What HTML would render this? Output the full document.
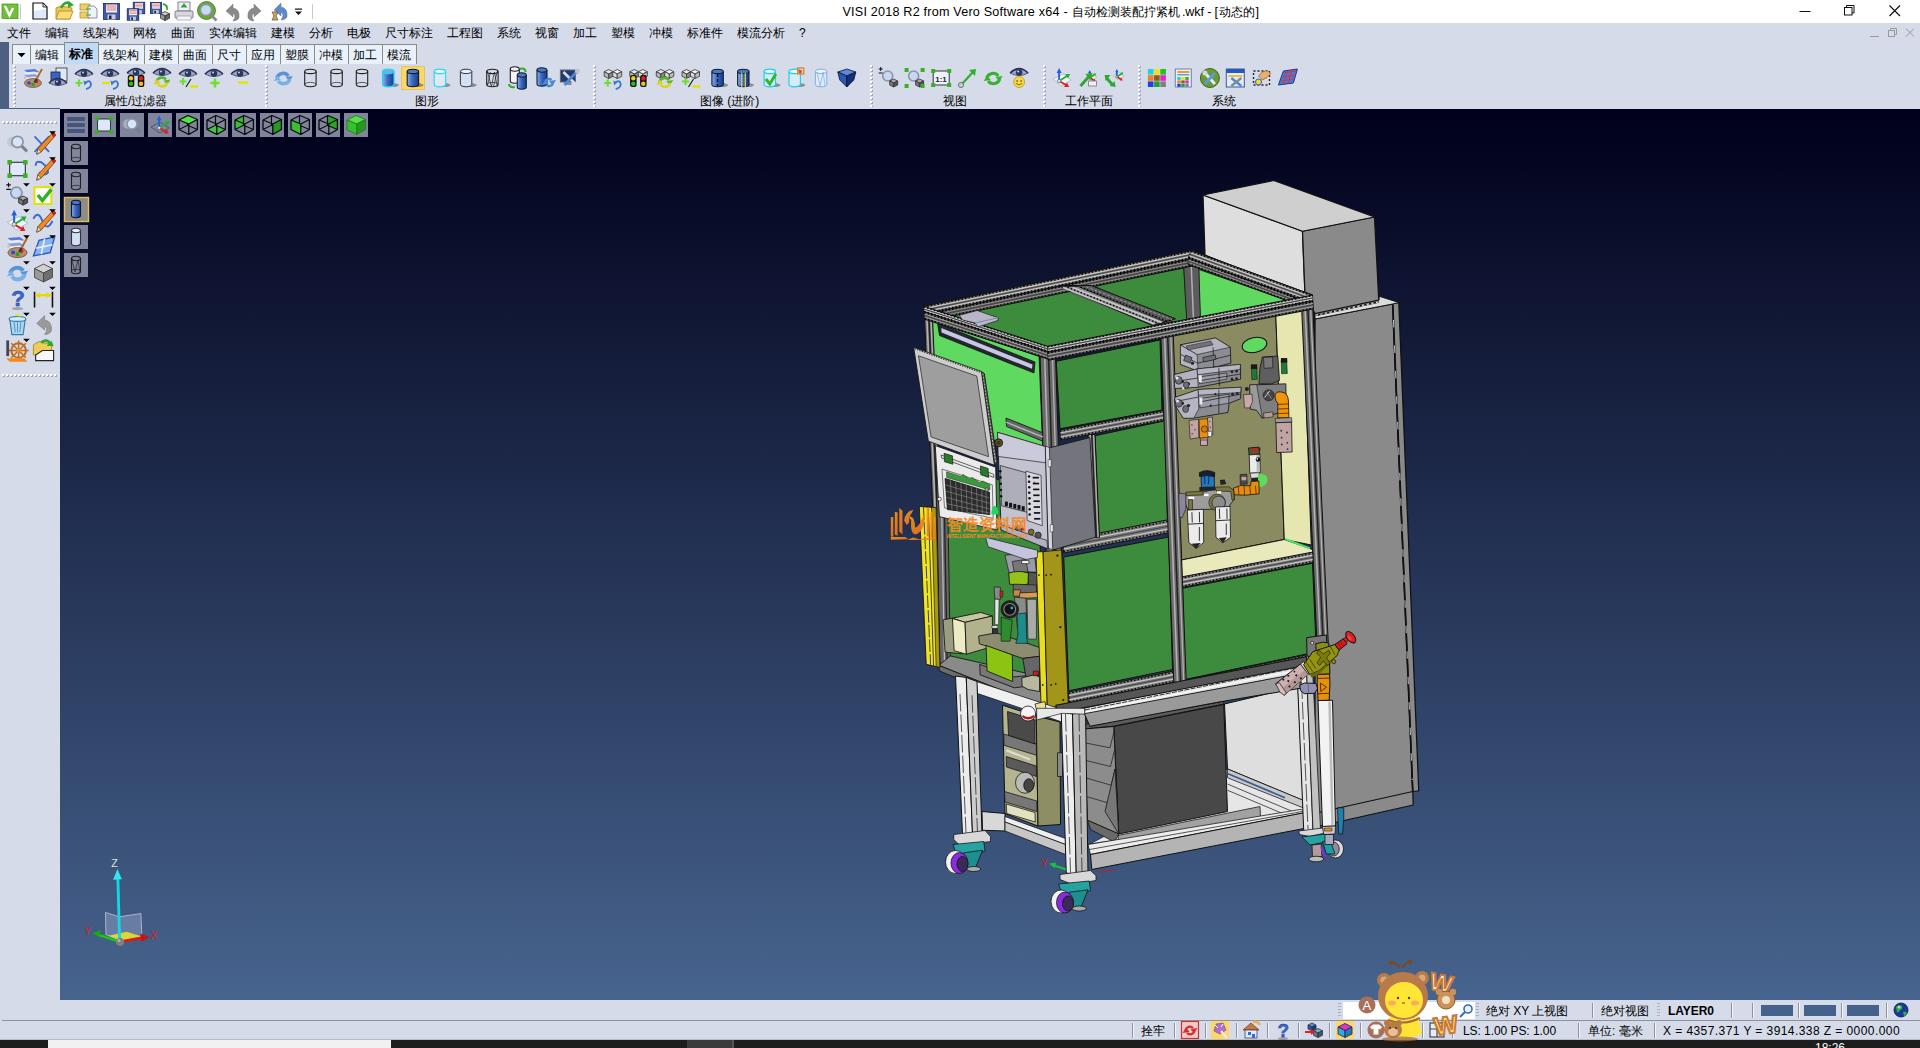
<!DOCTYPE html>
<html>
<head>
<meta charset="utf-8">
<title>VISI 2018 R2</title>
<style>
html,body{margin:0;padding:0;}
body{width:1920px;height:1048px;overflow:hidden;background:#d6dbe9;font-family:"Liberation Sans",sans-serif;font-size:12px;color:#000;position:relative;}
.abs{position:absolute;}
.t{position:absolute;white-space:pre;font-size:12px;line-height:14px;color:#000;}
.grip{position:absolute;top:65px;width:3px;height:42px;background-image:linear-gradient(to bottom,#fff 0,#fff 2px,transparent 2px,transparent 4px),linear-gradient(to bottom,#9ba3b8 0,#9ba3b8 2px,transparent 2px,transparent 4px);background-size:2px 4px,2px 4px;background-position:0 0,1px 1px;background-repeat:repeat-y,repeat-y;}
.hgrip{position:absolute;height:3px;background-image:linear-gradient(to right,#fff 0,#fff 2px,transparent 2px,transparent 4px),linear-gradient(to right,#9ba3b8 0,#9ba3b8 2px,transparent 2px,transparent 4px);background-size:4px 2px,4px 2px;background-position:0 0,1px 1px;background-repeat:repeat-x,repeat-x;}
.grip2{position:absolute;width:3px;height:15px;background-image:linear-gradient(to bottom,#aab0c2 0,#aab0c2 1px,transparent 1px,transparent 3px);background-size:3px 3px;}
.vsep{position:absolute;width:1px;height:15px;background:#8e929f;box-shadow:1px 0 0 #f4f6fb;}
#viewport{left:60px;top:109px;width:1860px;height:891px;background:linear-gradient(to bottom,#00001a 0%,#47648e 100%);}
</style>
</head>
<body>
<div class="abs" style="left:0;top:0;width:1920px;height:23px;background:#fff"></div>
<div class="abs" style="left:0;top:23px;width:1920px;height:20px;background:#d6dbe9"></div>
<div class="abs" style="left:0;top:43px;width:1920px;height:66px;background:#d6dbe9"></div>
<div class="abs" style="left:0;top:42px;width:9px;height:67px;background:#4d6082"></div>
<div class="abs" style="left:9px;top:108px;width:51px;height:1px;background:#4d6082"></div>
<span class="t" style="letter-spacing:0.205px;left:842.5px;top:4.5px;font-size:12.6px;">VISI 2018 R2 from Vero Software x64 - </span>
<span class="t" style="left:1072px;top:4.5px;font-size:12.2px;">自动检测装配拧紧机</span>
<span class="t" style="letter-spacing:-0.137px;left:1182px;top:4.5px;font-size:12.6px;">.wkf - [</span>
<span class="t" style="left:1218.5px;top:4.5px;font-size:12.2px;">动态的</span>
<span class="t" style="left:1255.5px;top:4.5px;font-size:12.6px;">]</span>
<span class="t" style="left:7px;top:26px;">文件</span>
<span class="t" style="left:45px;top:26px;">编辑</span>
<span class="t" style="left:83px;top:26px;">线架构</span>
<span class="t" style="left:133px;top:26px;">网格</span>
<span class="t" style="left:171px;top:26px;">曲面</span>
<span class="t" style="left:209px;top:26px;">实体编辑</span>
<span class="t" style="left:271px;top:26px;">建模</span>
<span class="t" style="left:309px;top:26px;">分析</span>
<span class="t" style="left:347px;top:26px;">电极</span>
<span class="t" style="left:385px;top:26px;">尺寸标注</span>
<span class="t" style="left:447px;top:26px;">工程图</span>
<span class="t" style="left:497px;top:26px;">系统</span>
<span class="t" style="left:535px;top:26px;">视窗</span>
<span class="t" style="left:573px;top:26px;">加工</span>
<span class="t" style="left:611px;top:26px;">塑模</span>
<span class="t" style="left:649px;top:26px;">冲模</span>
<span class="t" style="left:687px;top:26px;">标准件</span>
<span class="t" style="left:737px;top:26px;">模流分析</span>
<span class="t" style="left:799px;top:26px;">?</span>
<div class="abs" style="left:12px;top:44px;width:19px;height:20px;background:#e9f1fc;border:1px solid #8e8c7c;border-bottom:none;box-sizing:border-box"></div>
<div class="abs" style="left:30px;top:44px;width:35px;height:20px;background:#e9f1fc;border:1px solid #8e8c7c;border-bottom:none;box-sizing:border-box"></div>
<span class="t" style="left:35px;top:48px;">编辑</span>
<div class="abs" style="left:64px;top:42px;width:35px;height:22px;background:#c1dbf6;border:1px solid #8c8a80;border-bottom:none;box-sizing:border-box"></div>
<span class="t" style="left:69px;top:47px;font-weight:bold;">标准</span>
<div class="abs" style="left:98px;top:44px;width:47px;height:20px;background:#e9f1fc;border:1px solid #8e8c7c;border-bottom:none;box-sizing:border-box"></div>
<span class="t" style="left:103px;top:48px;">线架构</span>
<div class="abs" style="left:144px;top:44px;width:35px;height:20px;background:#e9f1fc;border:1px solid #8e8c7c;border-bottom:none;box-sizing:border-box"></div>
<span class="t" style="left:149px;top:48px;">建模</span>
<div class="abs" style="left:178px;top:44px;width:35px;height:20px;background:#e9f1fc;border:1px solid #8e8c7c;border-bottom:none;box-sizing:border-box"></div>
<span class="t" style="left:183px;top:48px;">曲面</span>
<div class="abs" style="left:212px;top:44px;width:35px;height:20px;background:#e9f1fc;border:1px solid #8e8c7c;border-bottom:none;box-sizing:border-box"></div>
<span class="t" style="left:217px;top:48px;">尺寸</span>
<div class="abs" style="left:246px;top:44px;width:35px;height:20px;background:#e9f1fc;border:1px solid #8e8c7c;border-bottom:none;box-sizing:border-box"></div>
<span class="t" style="left:251px;top:48px;">应用</span>
<div class="abs" style="left:280px;top:44px;width:35px;height:20px;background:#e9f1fc;border:1px solid #8e8c7c;border-bottom:none;box-sizing:border-box"></div>
<span class="t" style="left:285px;top:48px;">塑膜</span>
<div class="abs" style="left:314px;top:44px;width:35px;height:20px;background:#e9f1fc;border:1px solid #8e8c7c;border-bottom:none;box-sizing:border-box"></div>
<span class="t" style="left:319px;top:48px;">冲模</span>
<div class="abs" style="left:348px;top:44px;width:35px;height:20px;background:#e9f1fc;border:1px solid #8e8c7c;border-bottom:none;box-sizing:border-box"></div>
<span class="t" style="left:353px;top:48px;">加工</span>
<div class="abs" style="left:382px;top:44px;width:35px;height:20px;background:#e9f1fc;border:1px solid #8e8c7c;border-bottom:none;box-sizing:border-box"></div>
<span class="t" style="left:387px;top:48px;">模流</span>
<div class="grip" style="left:13px"></div>
<div class="grip" style="left:265px"></div>
<div class="grip" style="left:593px"></div>
<div class="grip" style="left:870px"></div>
<div class="grip" style="left:1043px"></div>
<div class="grip" style="left:1138px"></div>
<span class="t" style="left:104px;top:94px;">属性/过滤器</span>
<span class="t" style="left:415px;top:94px;">图形</span>
<span class="t" style="left:700px;top:94px;">图像 (进阶)</span>
<span class="t" style="left:943px;top:94px;">视图</span>
<span class="t" style="left:1065px;top:94px;">工作平面</span>
<span class="t" style="left:1211.5px;top:94px;">系统</span>
<div class="abs" style="left:401px;top:66px;width:24px;height:24px;background:#fdd767;border:1px solid #e5c365;box-sizing:border-box"></div>
<div class="abs" style="left:0;top:109px;width:60px;height:891px;background:#d6dbe9"></div>
<div class="hgrip" style="left:2px;top:121px;width:56px"></div>
<div class="hgrip" style="left:2px;top:374px;width:56px"></div>
<div class="abs" style="left:0;top:1000px;width:1920px;height:40px;background:#d6dbe9"></div>
<div class="abs" style="left:2px;top:1020px;width:1918px;height:1px;background:#8e929f"></div>
<div class="abs" style="left:0;top:1039px;width:1920px;height:1px;background:#b9bdc9"></div>
<div class="abs" style="left:0;top:1040px;width:1920px;height:8px;background:#1d1d1d"></div>
<div class="abs" style="left:48px;top:1040px;width:343px;height:8px;background:#f1f1f1"></div>
<div class="abs" style="left:687px;top:1040px;width:46px;height:8px;background:#3b3b3b"></div>
<div class="abs" style="left:732px;top:1040px;width:2px;height:8px;background:#555"></div>
<div class="abs" style="left:1343px;top:1002px;width:132px;height:17px;background:#fff"></div>
<div class="grip2" style="left:1338px;top:1003px"></div>
<div class="grip2" style="left:1476px;top:1003px"></div>
<span class="t" style="left:1486px;top:1004px;">绝对 XY 上视图</span>
<div class="vsep" style="left:1592px;top:1003px"></div>
<span class="t" style="left:1601px;top:1004px;">绝对视图</span>
<div class="grip2" style="left:1657px;top:1003px"></div>
<span class="t" style="letter-spacing:-0.042px;left:1668px;top:1004px;font-weight:bold;">LAYER0</span>
<div class="vsep" style="left:1731px;top:1003px"></div>
<div class="vsep" style="left:1752px;top:1003px"></div>
<div class="vsep" style="left:1798px;top:1003px"></div>
<div class="vsep" style="left:1841px;top:1003px"></div>
<div class="vsep" style="left:1886px;top:1003px"></div>
<div class="abs" style="left:1761px;top:1005px;width:32px;height:11px;background:#45628d"></div>
<div class="abs" style="left:1804px;top:1005px;width:32px;height:11px;background:#45628d"></div>
<div class="abs" style="left:1847px;top:1005px;width:32px;height:11px;background:#45628d"></div>
<div class="vsep" style="left:1132px;top:1023px"></div>
<div class="vsep" style="left:1174px;top:1023px"></div>
<div class="vsep" style="left:1205px;top:1023px"></div>
<div class="vsep" style="left:1236px;top:1023px"></div>
<div class="vsep" style="left:1267px;top:1023px"></div>
<div class="vsep" style="left:1298px;top:1023px"></div>
<div class="vsep" style="left:1329px;top:1023px"></div>
<div class="vsep" style="left:1360px;top:1023px"></div>
<div class="vsep" style="left:1391px;top:1023px"></div>
<div class="vsep" style="left:1422px;top:1023px"></div>
<div class="vsep" style="left:1452px;top:1023px"></div>
<div class="vsep" style="left:1578px;top:1023px"></div>
<div class="vsep" style="left:1654px;top:1023px"></div>
<span class="t" style="left:1141px;top:1024px;">拴牢</span>
<span class="t" style="letter-spacing:-0.063px;left:1463px;top:1024px;">LS: 1.00 PS: 1.00</span>
<span class="t" style="left:1588px;top:1024px;">单位: 毫米</span>
<span class="t" style="letter-spacing:0.427px;left:1663px;top:1024px;">X = 4357.371 Y = 3914.338 Z = 0000.000</span>
<span class="t" style="left:1815px;top:1041px;color:#fff;font-size:12px;">18:26</span>
<div id="viewport" class="abs"></div>
<svg class="abs" style="left:0;top:0" width="1920" height="1048" viewBox="0 0 1920 1048">
<!-- ===== MODEL (M4 coords: real=(900,170)+p/4) ===== -->
<g transform="translate(900,170) scale(0.25)" stroke-linejoin="round">
<!-- tall cabinet -->
<polygon points="1660,596 1971,536 2051,2486 2053,2540 1772,2603 1660,2628" fill="#8a8a8a" stroke="#111" stroke-width="5"/>
<polygon points="1971,536 1995,530 2075,2483 2051,2486" fill="#8a8a8a" stroke="#111" stroke-width="5"/>
<line x1="1660" y1="2573" x2="2051" y2="2486" stroke="#111" stroke-width="5"/>
<polygon points="1660,574 1915,520 1917,505 1995,530 1971,536 1660,596" fill="#dcdcdc" stroke="#111" stroke-width="4"/>
<line x1="1662" y1="581" x2="1915" y2="527" stroke="#111" stroke-width="9"/>
<line x1="1662" y1="581" x2="1915" y2="527" stroke="#eee" stroke-width="5" stroke-dasharray="10 9"/>
<line x1="1971" y1="540" x2="2051" y2="2486" stroke="#111" stroke-width="7"/>
<line x1="1974" y1="600" x2="2049" y2="2440" stroke="#fff" stroke-width="3" stroke-dasharray="30 72"/>
<!-- top box -->
<polygon points="1212,100 1610,245 1620,500 1220,340" fill="#dedede" stroke="#111" stroke-width="5"/>
<polygon points="1610,245 1898,188 1915,520 1660,574 1620,500" fill="#8a8a8a" stroke="#111" stroke-width="5"/>
<polygon points="1212,100 1495,42 1898,188 1610,245" fill="#cfcfcf" stroke="#111" stroke-width="5"/>
</g>
<g transform="translate(900,170) scale(0.25)" stroke-linejoin="round">
<polygon points="95,545 1165,322 1650,500 590,705" fill="#5a5a5a" stroke="#111" stroke-width="4" />
<polygon points="205,580 645,478 1010,622 598,712" fill="#3d8b3d" stroke="none" stroke-width="0" />
<polygon points="770,462 1135,392 1148,605 1100,612" fill="#3d8b3d" stroke="#111" stroke-width="3" />
<polygon points="1195,398 1560,525 1200,592" fill="#5fd95f" stroke="#111" stroke-width="3" />
<polygon points="1135,385 1195,385 1202,598 1147,608" fill="#5c5c5c" stroke="#111" stroke-width="3" />
<line x1="1165" y1="385" x2="1174" y2="600" stroke="#b0b0b0" stroke-width="6"/>
<polygon points="95,545 1165,322 1169,354 99,577" fill="#787878" stroke="#111" stroke-width="4" />
<line x1="96.2" y1="554.6" x2="1166.2" y2="331.6" stroke="#c6c6c6" stroke-width="5"/>
<line x1="97.8" y1="567.4" x2="1167.8" y2="344.4" stroke="#c6c6c6" stroke-width="5"/>
<line x1="97" y1="561" x2="1167" y2="338" stroke="#444" stroke-width="4"/>
<line x1="95.48" y1="548.84" x2="1165.48" y2="325.84" stroke="#000" stroke-width="5" stroke-dasharray="6 8"/>
<line x1="98.52" y1="573.16" x2="1168.52" y2="350.16" stroke="#000" stroke-width="5" stroke-dasharray="6 8"/>
<polygon points="99,577 1169,354 1169,384 99,607" fill="#585858" stroke="#111" stroke-width="4" />
<line x1="99" y1="586" x2="1169" y2="363" stroke="#8c8c8c" stroke-width="5"/>
<line x1="99" y1="598" x2="1169" y2="375" stroke="#8c8c8c" stroke-width="5"/>
<line x1="99" y1="592" x2="1169" y2="369" stroke="#444" stroke-width="4"/>
<line x1="99" y1="580.6" x2="1169" y2="357.6" stroke="#000" stroke-width="5" stroke-dasharray="6 8"/>
<line x1="99" y1="603.4" x2="1169" y2="380.4" stroke="#000" stroke-width="5" stroke-dasharray="6 8"/>
<polygon points="1165,322 1650,500 1638,530 1153,352" fill="#787878" stroke="#111" stroke-width="4" />
<line x1="1161.4" y1="331" x2="1646.4" y2="509" stroke="#c6c6c6" stroke-width="5"/>
<line x1="1156.6" y1="343" x2="1641.6" y2="521" stroke="#c6c6c6" stroke-width="5"/>
<line x1="1159" y1="337" x2="1644" y2="515" stroke="#444" stroke-width="4"/>
<line x1="1163.56" y1="325.6" x2="1648.56" y2="503.6" stroke="#000" stroke-width="5" stroke-dasharray="6 8"/>
<line x1="1154.44" y1="348.4" x2="1639.44" y2="526.4" stroke="#000" stroke-width="5" stroke-dasharray="6 8"/>
<polygon points="1153,352 1638,530 1638,556 1153,378" fill="#585858" stroke="#111" stroke-width="4" />
<line x1="1153" y1="359.8" x2="1638" y2="537.8" stroke="#8c8c8c" stroke-width="5"/>
<line x1="1153" y1="370.2" x2="1638" y2="548.2" stroke="#8c8c8c" stroke-width="5"/>
<line x1="1153" y1="365" x2="1638" y2="543" stroke="#444" stroke-width="4"/>
<line x1="1153" y1="355.12" x2="1638" y2="533.12" stroke="#000" stroke-width="5" stroke-dasharray="6 8"/>
<line x1="1153" y1="374.88" x2="1638" y2="552.88" stroke="#000" stroke-width="5" stroke-dasharray="6 8"/>
<polygon points="636,462 765,462 1102,595 1010,622" fill="#5a5a5a" stroke="#111" stroke-width="4" />
<polygon points="640,466 712,466 1060,607 1010,620" fill="#8a8a8a" stroke="#111" stroke-width="3" />
<line x1="652" y1="470" x2="1018" y2="616" stroke="#c8c8c8" stroke-width="7"/>
<line x1="690" y1="470" x2="1046" y2="610" stroke="#c8c8c8" stroke-width="7"/>
<line x1="670" y1="469" x2="1032" y2="613" stroke="#000" stroke-width="5" stroke-dasharray="6 8"/>
<line x1="722" y1="468" x2="1068" y2="604" stroke="#000" stroke-width="5" stroke-dasharray="6 8"/>
<line x1="745" y1="468" x2="1088" y2="598" stroke="#999" stroke-width="4" stroke-dasharray="10 8"/>
<polygon points="122,600 556,745 572,1140 135,1010" fill="#5fd95f" stroke="#111" stroke-width="3" />
<polygon points="150,612 540,768 536,812 158,662" fill="#26262e" stroke="#111" stroke-width="3" />
<polygon points="165,632 530,778 528,795 166,650" fill="#c6c6e6" stroke="none" stroke-width="0" />
<polygon points="625,765 1040,680 1048,960 640,1035" fill="#3d8b3d" stroke="#111" stroke-width="4" />
<polygon points="780,1063 1060,1003 1070,1418 795,1463" fill="#3d8b3d" stroke="#111" stroke-width="4" />
<polygon points="655,1548 1075,1468 1090,1998 675,2083" fill="#3d8b3d" stroke="#111" stroke-width="4" />
<polygon points="1085,660 1503,578 1537,1478 1125,1560" fill="#8b8b62" stroke="#111" stroke-width="4" />
<polygon points="1503,578 1612,555 1645,1500 1537,1478" fill="#e6e6b0" stroke="#111" stroke-width="4" />
<polygon points="1125,1560 1537,1478 1650,1518 1652,1535 1128,1632" fill="#e9e9bc" stroke="#111" stroke-width="4" />
<line x1="1540" y1="1476" x2="1640" y2="1514" stroke="#4fe070" stroke-width="8"/>
<polygon points="1130,1673 1650,1573 1665,1928 1140,2038" fill="#3d8b3d" stroke="#111" stroke-width="4" />
<ellipse cx="1418" cy="700" rx="50" ry="30" transform="rotate(-12 1418 700)" fill="#5fd95f" stroke="#111" stroke-width="4"/>
<polygon points="640,1040 1052,962 1055,1002 643,1080" fill="#787878" stroke="#111" stroke-width="4" />
<line x1="640.9" y1="1052" x2="1052.9" y2="974" stroke="#c6c6c6" stroke-width="5"/>
<line x1="642.1" y1="1068" x2="1054.1" y2="990" stroke="#c6c6c6" stroke-width="5"/>
<line x1="641.5" y1="1060" x2="1053.5" y2="982" stroke="#444" stroke-width="4"/>
<line x1="640.36" y1="1044.8" x2="1052.36" y2="966.8" stroke="#000" stroke-width="5" stroke-dasharray="6 8"/>
<line x1="642.64" y1="1075.2" x2="1054.64" y2="997.2" stroke="#000" stroke-width="5" stroke-dasharray="6 8"/>
<polygon points="652,1480 1078,1398 1081,1450 655,1532" fill="#787878" stroke="#111" stroke-width="4" />
<line x1="652.9" y1="1495.6" x2="1078.9" y2="1413.6" stroke="#c6c6c6" stroke-width="5"/>
<line x1="654.1" y1="1516.4" x2="1080.1" y2="1434.4" stroke="#c6c6c6" stroke-width="5"/>
<line x1="653.5" y1="1506" x2="1079.5" y2="1424" stroke="#444" stroke-width="4"/>
<line x1="652.36" y1="1486.24" x2="1078.36" y2="1404.24" stroke="#000" stroke-width="5" stroke-dasharray="6 8"/>
<line x1="654.64" y1="1525.76" x2="1080.64" y2="1443.76" stroke="#000" stroke-width="5" stroke-dasharray="6 8"/>
<polygon points="1125,1628 1652,1528 1654,1570 1127,1670" fill="#787878" stroke="#111" stroke-width="4" />
<line x1="1125.6" y1="1640.6" x2="1652.6" y2="1540.6" stroke="#c6c6c6" stroke-width="5"/>
<line x1="1126.4" y1="1657.4" x2="1653.4" y2="1557.4" stroke="#c6c6c6" stroke-width="5"/>
<line x1="1126" y1="1649" x2="1653" y2="1549" stroke="#444" stroke-width="4"/>
<line x1="1125.24" y1="1633.04" x2="1652.24" y2="1533.04" stroke="#000" stroke-width="5" stroke-dasharray="6 8"/>
<line x1="1126.76" y1="1664.96" x2="1653.76" y2="1564.96" stroke="#000" stroke-width="5" stroke-dasharray="6 8"/>
<polygon points="675,2088 1100,2003 1103,2048 678,2133" fill="#787878" stroke="#111" stroke-width="4" />
<line x1="675.9" y1="2101.5" x2="1100.9" y2="2016.5" stroke="#c6c6c6" stroke-width="5"/>
<line x1="677.1" y1="2119.5" x2="1102.1" y2="2034.5" stroke="#c6c6c6" stroke-width="5"/>
<line x1="676.5" y1="2110.5" x2="1101.5" y2="2025.5" stroke="#444" stroke-width="4"/>
<line x1="675.36" y1="2093.4" x2="1100.36" y2="2008.4" stroke="#000" stroke-width="5" stroke-dasharray="6 8"/>
<line x1="677.64" y1="2127.6" x2="1102.64" y2="2042.6" stroke="#000" stroke-width="5" stroke-dasharray="6 8"/>
<polygon points="1140,2040 1670,1930 1673,1975 1143,2085" fill="#787878" stroke="#111" stroke-width="4" />
<line x1="1140.9" y1="2053.5" x2="1670.9" y2="1943.5" stroke="#c6c6c6" stroke-width="5"/>
<line x1="1142.1" y1="2071.5" x2="1672.1" y2="1961.5" stroke="#c6c6c6" stroke-width="5"/>
<line x1="1141.5" y1="2062.5" x2="1671.5" y2="1952.5" stroke="#444" stroke-width="4"/>
<line x1="1140.36" y1="2045.4" x2="1670.36" y2="1935.4" stroke="#000" stroke-width="5" stroke-dasharray="6 8"/>
<line x1="1142.64" y1="2079.6" x2="1672.64" y2="1969.6" stroke="#000" stroke-width="5" stroke-dasharray="6 8"/>
<polygon points="1043,655 1093,655 1145,2050 1095,2050" fill="#6a6a6a" stroke="#111" stroke-width="4" />
<line x1="1058" y1="655" x2="1110" y2="2050" stroke="#b4b4b4" stroke-width="6"/>
<line x1="1070.5" y1="655" x2="1122.5" y2="2050" stroke="#222" stroke-width="6"/>
<line x1="1083" y1="655" x2="1135" y2="2050" stroke="#b4b4b4" stroke-width="5"/>
<polygon points="1605,520 1650,520 1713,1890 1668,1890" fill="#6a6a6a" stroke="#111" stroke-width="4" />
<line x1="1618.5" y1="520" x2="1681.5" y2="1890" stroke="#b4b4b4" stroke-width="6"/>
<line x1="1629.75" y1="520" x2="1692.75" y2="1890" stroke="#222" stroke-width="6"/>
<line x1="1641" y1="520" x2="1704" y2="1890" stroke="#b4b4b4" stroke-width="5"/>
<polygon points="560,740 622,740 647,1540 585,1540" fill="#6a6a6a" stroke="#111" stroke-width="4" />
<line x1="578.6" y1="740" x2="603.6" y2="1540" stroke="#b4b4b4" stroke-width="6"/>
<line x1="594.1" y1="740" x2="619.1" y2="1540" stroke="#222" stroke-width="6"/>
<line x1="609.6" y1="740" x2="634.6" y2="1540" stroke="#b4b4b4" stroke-width="5"/>
<polygon points="752,1060 780,1060 798,1470 770,1470" fill="#6a6a6a" stroke="#111" stroke-width="4" />
<line x1="760.4" y1="1060" x2="778.4" y2="1470" stroke="#b4b4b4" stroke-width="6"/>
<line x1="767.4" y1="1060" x2="785.4" y2="1470" stroke="#222" stroke-width="6"/>
<line x1="774.4" y1="1060" x2="792.4" y2="1470" stroke="#b4b4b4" stroke-width="5"/>
<polygon points="98,590 130,590 190,1985 158,1985" fill="#6a6a6a" stroke="#111" stroke-width="4" />
<line x1="107.6" y1="590" x2="167.6" y2="1985" stroke="#b4b4b4" stroke-width="6"/>
<line x1="115.6" y1="590" x2="175.6" y2="1985" stroke="#222" stroke-width="6"/>
<line x1="123.6" y1="590" x2="183.6" y2="1985" stroke="#b4b4b4" stroke-width="5"/>
<polygon points="95,545 590,705 592,727 97,567" fill="#787878" stroke="#111" stroke-width="4" />
<line x1="95.6" y1="551.6" x2="590.6" y2="711.6" stroke="#c6c6c6" stroke-width="5"/>
<line x1="96.4" y1="560.4" x2="591.4" y2="720.4" stroke="#c6c6c6" stroke-width="5"/>
<line x1="96" y1="556" x2="591" y2="716" stroke="#444" stroke-width="4"/>
<line x1="95.24" y1="547.64" x2="590.24" y2="707.64" stroke="#000" stroke-width="5" stroke-dasharray="6 8"/>
<line x1="96.76" y1="564.36" x2="591.76" y2="724.36" stroke="#000" stroke-width="5" stroke-dasharray="6 8"/>
<polygon points="97,567 592,727 594,757 99,597" fill="#5c5c5c" stroke="#111" stroke-width="4" />
<line x1="97.6" y1="576" x2="592.6" y2="736" stroke="#9a9a9a" stroke-width="5"/>
<line x1="98.4" y1="588" x2="593.4" y2="748" stroke="#9a9a9a" stroke-width="5"/>
<line x1="98" y1="582" x2="593" y2="742" stroke="#444" stroke-width="4"/>
<line x1="97.24" y1="570.6" x2="592.24" y2="730.6" stroke="#000" stroke-width="5" stroke-dasharray="6 8"/>
<line x1="98.76" y1="593.4" x2="593.76" y2="753.4" stroke="#000" stroke-width="5" stroke-dasharray="6 8"/>
<polygon points="590,705 1650,500 1651,524 591,729" fill="#787878" stroke="#111" stroke-width="4" />
<line x1="590.3" y1="712.2" x2="1650.3" y2="507.2" stroke="#c6c6c6" stroke-width="5"/>
<line x1="590.7" y1="721.8" x2="1650.7" y2="516.8" stroke="#c6c6c6" stroke-width="5"/>
<line x1="590.5" y1="717" x2="1650.5" y2="512" stroke="#444" stroke-width="4"/>
<line x1="590.12" y1="707.88" x2="1650.12" y2="502.88" stroke="#000" stroke-width="5" stroke-dasharray="6 8"/>
<line x1="590.88" y1="726.12" x2="1650.88" y2="521.12" stroke="#000" stroke-width="5" stroke-dasharray="6 8"/>
<polygon points="591,729 1651,524 1653,556 593,761" fill="#5c5c5c" stroke="#111" stroke-width="4" />
<line x1="591.6" y1="738.6" x2="1651.6" y2="533.6" stroke="#9a9a9a" stroke-width="5"/>
<line x1="592.4" y1="751.4" x2="1652.4" y2="546.4" stroke="#9a9a9a" stroke-width="5"/>
<line x1="592" y1="745" x2="1652" y2="540" stroke="#444" stroke-width="4"/>
<line x1="591.24" y1="732.84" x2="1651.24" y2="527.84" stroke="#000" stroke-width="5" stroke-dasharray="6 8"/>
<line x1="592.76" y1="757.16" x2="1652.76" y2="552.16" stroke="#000" stroke-width="5" stroke-dasharray="6 8"/>
<polygon points="237,581 309,562 393,591 392,602 312,628 300,612 250,600" fill="#b6b6c8" stroke="#222" stroke-width="3" />
<line x1="300" y1="612" x2="392" y2="591" stroke="#8888a0" stroke-width="4"/>
</g>
<!-- ===== A-D face lower: Z2 coords (900,530) scale 200/953 ===== -->
<g transform="translate(900,530) scale(0.20986)" stroke-linejoin="round" stroke="#111" stroke-width="4">
<!-- dark green interior -->
<polygon points="215,-320 660,-180 690,820 200,640" fill="#3d8b3d"/>
<!-- post A lower -->
<polygon points="172,-300 225,-290 240,620 190,640" fill="#666"/>
<line x1="195" y1="-290" x2="212" y2="630" stroke="#bbb" stroke-width="6"/>
<line x1="208" y1="-290" x2="225" y2="630" stroke="#222" stroke-width="6"/>
<!-- table plate top + edge -->
<polygon points="185,645 240,600 700,705 700,850" fill="#8a8a8a"/>
<polygon points="185,645 700,850 700,878 188,672" fill="#6c6c6c"/>
<!-- cream box -->
<polygon points="205,428 250,420 300,590 215,582" fill="#9c9c80"/>
<polygon points="250,420 385,393 440,410 310,440" fill="#c8c8a0"/>
<polygon points="250,422 310,440 316,592 258,575" fill="#ecebc4"/>
<polygon points="310,440 440,410 442,555 316,592" fill="#b2b28c"/>
<!-- lower plates -->
<polygon points="380,640 545,700 640,690 640,740 545,752 382,690" fill="#777"/>
<polygon points="375,505 460,490 665,560 665,602 585,612 378,542" fill="#8c8c70"/>
<polygon points="585,612 665,602 665,690 600,700" fill="#666"/>
<!-- lime box -->
<polygon points="410,550 535,595 537,722 415,672" fill="#8cc414"/>
<!-- small parts at bottom right -->
<polygon points="580,705 640,690 665,700 665,770 610,760 582,745" fill="#b8b8a0"/>
<rect x="635" y="672" width="24" height="22" fill="#c02020" stroke-width="3"/>
<!-- mechanism -->
<polygon points="500,120 640,110 650,200 520,205" fill="#9a9aa8" stroke-width="3"/>
<polygon points="535,150 600,140 610,200 545,205" fill="#777" stroke-width="3"/>
<rect x="580" y="146" width="34" height="14" fill="#fff" stroke-width="3"/>
<polygon points="610,200 655,205 655,300 612,300" fill="#555"/>
<path d="M518,205 Q565,190 612,205 L610,258 Q565,268 522,258 Z" fill="#93c21a"/>
<polygon points="540,258 650,262 650,300 540,300" fill="#666" stroke-width="3"/>
<rect x="540" y="285" width="34" height="30" fill="#c88848" stroke-width="3"/>
<polygon points="570,300 655,296 655,322 570,326" fill="#d89858" stroke-width="3"/>
<polygon points="448,272 478,272 480,330 452,330" fill="#888" stroke-width="3"/>
<polygon points="452,330 472,330 470,452 452,452" fill="#e8e8e8" stroke-width="3"/>
<rect x="476" y="290" width="14" height="30" fill="#c02020" stroke-width="2"/>
<ellipse cx="452" cy="462" rx="16" ry="8" fill="#ddd" stroke-width="3"/>
<rect x="442" y="470" width="24" height="24" fill="#333" stroke-width="2"/>
<polygon points="545,320 600,325 605,470 560,470" fill="#8a8a8a" stroke-width="3"/>
<polygon points="605,330 650,330 650,520 610,520" fill="#aaa" stroke-width="3"/>
<polygon points="482,415 535,430 525,530 482,530" fill="#2e8b2e" stroke-width="3"/>
<polygon points="558,400 600,395 604,520 610,540 552,540 562,500" fill="#1f8c8c" stroke-width="3"/>
<circle cx="523" cy="378" r="42" fill="#222" stroke-width="3"/>
<circle cx="523" cy="378" r="28" fill="#111" stroke="#888" stroke-width="5"/>
<circle cx="533" cy="372" r="7" fill="#2aa0d8" stroke="none"/>
<!-- left yellow strip -->
<polygon points="92,-112 172,-106 190,655 125,640" fill="#f0e428"/>
<polygon points="150,-108 172,-106 190,655 172,650" fill="#a89a14" stroke-width="3"/>
<line x1="112" y1="-108" x2="146" y2="642" stroke="#222" stroke-width="4" stroke-dasharray="60 10"/>
<line x1="135" y1="-108" x2="160" y2="648" stroke="#222" stroke-width="4"/>
<!-- right yellow strip -->
<polygon points="648,105 682,103 702,852 672,832" fill="#eadc1e"/>
<polygon points="682,103 770,95 802,830 702,852" fill="#a3941a"/>
<g fill="#111" stroke="none"><circle cx="750" cy="122" r="5"/><circle cx="697" cy="215" r="4"/><circle cx="720" cy="213" r="4"/><circle cx="764" cy="463" r="5"/><circle cx="720" cy="738" r="4"/><circle cx="742" cy="733" r="4"/><circle cx="778" cy="810" r="5"/><circle cx="662" cy="215" r="4"/><circle cx="680" cy="738" r="4"/></g>
</g>
<!-- ===== A-D face upper: Z1 coords (900,340) scale 200/953 ===== -->
<g transform="translate(900,340) scale(0.20986)" stroke-linejoin="round" stroke="#111" stroke-width="4">
<!-- mid rail stub of A-D face -->
<polygon points="505,372 680,442 680,482 508,412" fill="#666"/>
<line x1="506" y1="392" x2="680" y2="462" stroke="#bbb" stroke-width="6"/>
<!-- keyboard panel -->
<polygon points="168,503 456,606 462,905 188,842" fill="#ebebeb"/>
<polygon points="196,548 446,640 448,655 198,562" fill="none" stroke-width="3"/>
<polygon points="200,615 440,690 444,850 212,800" fill="none" stroke="#333" stroke-width="3"/>
<polygon points="222,628 290,650 300,640 330,662 345,655 380,680 395,672 428,690 428,715 222,655" fill="#3a9a3a" stroke-width="2"/>
<polygon points="215,660 426,725 428,832 226,808" fill="#2c2c2c"/>
<g stroke="#999" stroke-width="2.5" fill="none">
<line x1="215" y1="690" x2="426" y2="752"/><line x1="217" y1="720" x2="427" y2="778"/><line x1="220" y1="750" x2="427" y2="805"/><line x1="223" y1="780" x2="428" y2="825"/>
<line x1="240" y1="668" x2="248" y2="812"/><line x1="265" y1="676" x2="272" y2="815"/><line x1="290" y1="684" x2="296" y2="818"/><line x1="315" y1="692" x2="320" y2="820"/><line x1="340" y1="700" x2="344" y2="823"/><line x1="365" y1="707" x2="368" y2="826"/><line x1="390" y1="715" x2="392" y2="828"/><line x1="410" y1="721" x2="412" y2="830"/>
</g>
<polygon points="210,540 250,552 252,592 212,580" fill="#2a7a2a" stroke-width="3"/>
<polygon points="383,600 420,612 422,655 385,642" fill="#2a7a2a" stroke-width="3"/>
<circle cx="188" cy="758" r="9" fill="#fff" stroke-width="3"/>
<circle cx="413" cy="713" r="9" fill="#999" stroke-width="2"/>
<!-- monitor -->
<polygon points="388,150 402,160 464,582 450,597" fill="#555"/>
<line x1="394" y1="160" x2="456" y2="585" stroke="#ddd" stroke-width="4" stroke-dasharray="8 8"/>
<polygon points="65,35 388,150 450,597 135,482" fill="#cdcdcd"/>
<polygon points="88,75 366,172 422,556 148,462" fill="#9e9e9e" stroke-width="3"/>
<line x1="70" y1="42" x2="386" y2="155" stroke="#222" stroke-width="5" stroke-dasharray="6 6"/>
<!-- control box: right side -->
<polygon points="708,515 905,465 932,940 725,1002" fill="#74747d"/>
<polygon points="690,505 712,512 728,1000 706,992" fill="#d2d2dc" stroke-width="3"/>
<rect x="706" y="570" width="14" height="34" fill="#eee" stroke-width="2"/><rect x="716" y="880" width="14" height="34" fill="#eee" stroke-width="2"/>
<!-- control box front -->
<polygon points="465,440 692,508 706,995 482,905" fill="#c2c2d0"/>
<polygon points="465,440 692,508 694,585 468,555" fill="#cacada" stroke-width="3"/>
<polygon points="478,598 600,632 640,640 642,830 484,790" fill="#aeaeba" stroke-width="3"/>
<polygon points="600,625 672,645 678,885 606,860" fill="#d8d8e0" stroke-width="3"/>
<g fill="#111" stroke="none">
<circle cx="615" cy="650" r="6"/><circle cx="615" cy="676" r="6"/><circle cx="616" cy="702" r="6"/><circle cx="616" cy="728" r="6"/><circle cx="617" cy="754" r="6"/><circle cx="617" cy="780" r="6"/><circle cx="618" cy="806" r="6"/><circle cx="618" cy="832" r="6"/>
<rect x="632" y="652" width="30" height="8"/><rect x="633" y="680" width="30" height="8"/><rect x="634" y="708" width="30" height="8"/><rect x="635" y="736" width="30" height="8"/><rect x="636" y="764" width="30" height="8"/><rect x="637" y="792" width="30" height="8"/><rect x="638" y="820" width="30" height="8"/><rect x="639" y="848" width="30" height="8"/>
<circle cx="478" cy="625" r="6"/><circle cx="479" cy="655" r="6"/><circle cx="480" cy="685" r="6"/><circle cx="481" cy="715" r="6"/><circle cx="482" cy="745" r="6"/>
<rect x="500" y="770" width="14" height="22"/><rect x="520" y="776" width="14" height="22"/><rect x="540" y="781" width="14" height="22"/><rect x="560" y="786" width="14" height="22"/><rect x="580" y="792" width="14" height="22"/>
</g>
<circle cx="640" cy="678" r="4" fill="#d02020" stroke="none"/>
<polygon points="480,880 700,955 704,995 482,905" fill="#b0b0c0" stroke-width="3"/>
<circle cx="560" cy="895" r="12" fill="#666" stroke-width="3"/><circle cx="585" cy="905" r="10" fill="#c03030" stroke-width="3"/><circle cx="625" cy="915" r="14" fill="#7a6a30" stroke-width="3"/><circle cx="658" cy="930" r="15" fill="#555" stroke-width="3"/>
<!-- tray under box -->
<polygon points="408,940 655,1002 655,1036 600,1046 420,985" fill="#c4c4dc" stroke-width="3"/>
<!-- knob + lamp -->
<circle cx="470" cy="490" r="19" fill="#5a5226"/><circle cx="470" cy="490" r="9" fill="#3a3418" stroke="none"/>
<path d="M436,832 Q434,795 452,790 Q470,795 468,832 Z" fill="#25d469" stroke="none"/>
</g>
<!-- ===== under table: T3 coords (900,694) scale .25 ===== -->
<g transform="translate(900,694) scale(0.25)" stroke-linejoin="round" stroke="#111" stroke-width="4">
<!-- white back panel -->
<polygon points="1298,40 1592,-30 1612,425 1310,300" fill="#dedede"/>
<!-- floor inside lower frame -->
<polygon points="760,600 1310,300 1612,430 1640,470" fill="#e6e6e6" stroke-width="3"/>
<polygon points="1310,300 1612,425 1612,455 1310,335" fill="#c9c9c9" stroke-width="3"/>
<line x1="1310" y1="318" x2="1540" y2="415" stroke="#3a5a9a" stroke-width="7"/>
<line x1="1310" y1="360" x2="1570" y2="470" stroke="#222" stroke-width="3"/>
<line x1="1310" y1="385" x2="1530" y2="478" stroke="#222" stroke-width="3"/>
<!-- khaki unit -->
<polygon points="410,45 545,88 552,528 420,478" fill="#b4b48e"/>
<polygon points="545,88 640,112 642,522 552,528" fill="#8e8e64"/>
<polygon points="415,160 545,200 546,245 416,205" fill="#777" stroke-width="3"/>
<polygon points="418,390 547,428 548,470 420,432" fill="#777" stroke-width="3"/>
<polygon points="425,440 540,474 541,512 427,478" fill="#e2e2bc" stroke-width="3"/>
<polygon points="430,70 540,104 540,200 434,165" fill="#4a4a4a" stroke-width="3"/>
<polygon points="425,250 545,288 546,330 426,292" fill="#5a5a5a" stroke-width="3"/>
<ellipse cx="500" cy="355" rx="38" ry="42" fill="#bbb" stroke-width="3"/><ellipse cx="515" cy="365" rx="20" ry="26" fill="#444" stroke-width="3"/>
<line x1="425" y1="225" x2="520" y2="262" stroke="#ddd" stroke-width="8"/><line x1="430" y1="455" x2="490" y2="478" stroke="#ddd" stroke-width="8"/>
<polygon points="630,235 650,235 650,330 630,330" fill="#888" stroke-width="3"/>
<!-- dark box -->
<polygon points="735,140 855,128 1295,40 1292,18 762,98" fill="#5c5c5c" stroke-width="3"/>
<line x1="770" y1="118" x2="1290" y2="32" stroke="#222" stroke-width="4" stroke-dasharray="14 8"/>
<polygon points="855,130 1295,42 1310,470 875,560" fill="#484848"/>
<polygon points="735,140 855,130 875,560 750,505" fill="#8c8c8c"/>
<g stroke="#222" stroke-width="3" fill="none"><polyline points="738,195 840,215 856,150"/><polyline points="740,265 842,290 858,225"/><polyline points="742,335 845,365 860,300"/><polyline points="745,410 847,440 862,375"/></g>
<polygon points="750,505 875,560 858,592 762,542" fill="#6a6a6a" stroke-width="3"/>
<polygon points="820,470 875,560 860,300" fill="#777" stroke-width="3"/>
<!-- angled bar -->
<polygon points="872,566 1440,450 1442,490 876,602" fill="#a2a2a2" stroke-width="3"/>
<!-- lower frame: left rail -->
<polygon points="328,470 420,478 420,548 330,545" fill="#d8d8d8"/>
<polygon points="420,490 662,578 662,602 420,512" fill="#efefef" stroke-width="3"/>
<polygon points="420,512 662,602 662,642 420,548" fill="#c6c6c6" stroke-width="3"/>
<!-- lower frame: front rail -->
<polygon points="752,602 1600,462 1642,470 762,642" fill="#ececec" stroke-width="3"/>
<polygon points="762,642 1642,470 1647,532 767,702" fill="#b4b4b4"/>
<line x1="758" y1="622" x2="1620" y2="468" stroke="#222" stroke-width="3"/>
<!-- legs -->
<polygon points="305,-50 648,62 648,112 310,-2" fill="#f0f0f0" stroke-width="3"/>
<polygon points="222,-72 265,-66 290,560 250,560" fill="#ececec"/>
<polygon points="265,-66 308,-50 328,560 290,560" fill="#cdcdcd"/>
<line x1="240" y1="0" x2="264" y2="555" stroke="#222" stroke-width="3" stroke-dasharray="70 12"/><line x1="288" y1="5" x2="310" y2="555" stroke="#222" stroke-width="3" stroke-dasharray="70 12"/>
<polygon points="215,562 340,546 362,570 362,590 240,606 215,582" fill="#d8d8d8" stroke-width="3"/>
<polygon points="645,72 690,80 705,722 665,716" fill="#ededed"/>
<polygon points="690,80 742,68 752,716 705,722" fill="#b9b9b9"/>
<line x1="662" y1="80" x2="682" y2="715" stroke="#222" stroke-width="3" stroke-dasharray="70 12"/><line x1="716" y1="80" x2="728" y2="715" stroke="#222" stroke-width="3" stroke-dasharray="70 12"/>
<polygon points="640,722 762,706 784,726 784,746 690,762 640,742" fill="#d8d8d8" stroke-width="3"/>
<polygon points="1588,-100 1626,-104 1652,545 1615,548" fill="#e6e6e6"/>
<polygon points="1626,-104 1650,-100 1682,540 1652,545" fill="#c2c2c2" stroke-width="3"/>
<line x1="1606" y1="-50" x2="1632" y2="540" stroke="#222" stroke-width="3" stroke-dasharray="70 12"/>
<polygon points="1595,548 1690,536 1700,556 1640,570 1598,562" fill="#d8d8d8" stroke-width="3"/>
<!-- gauge -->
<circle cx="512" cy="78" r="30" fill="#f4f4f4" stroke-width="3"/><path d="M488,92 Q512,112 538,92 L534,84 Q512,100 492,84 Z" fill="#b02020" stroke="none"/>
<polygon points="540,40 580,30 585,70 550,80" fill="#e8e0a0" stroke-width="3"/>
<!-- casters -->
<g>
<polygon points="212,602 335,590 340,628 300,640 225,640" fill="#25a3a3" stroke-width="3"/>
<polygon points="255,635 330,625 300,700 262,700" fill="#1e8e8e" stroke-width="3"/>
<ellipse cx="222" cy="672" rx="40" ry="46" fill="#f2f2f2" stroke-width="3"/>
<ellipse cx="238" cy="676" rx="34" ry="42" fill="#8a2be2" stroke-width="3"/>
<ellipse cx="250" cy="680" rx="22" ry="30" fill="#3a2a5a" stroke-width="3"/>
<ellipse cx="295" cy="700" rx="28" ry="10" fill="#aaa" stroke-width="3"/>
</g>
<g transform="translate(422,158)">
<polygon points="212,602 335,590 340,628 300,640 225,640" fill="#25a3a3" stroke-width="3"/>
<polygon points="255,635 330,625 300,700 262,700" fill="#1e8e8e" stroke-width="3"/>
<ellipse cx="222" cy="672" rx="40" ry="46" fill="#f2f2f2" stroke-width="3"/>
<ellipse cx="238" cy="676" rx="34" ry="42" fill="#8a2be2" stroke-width="3"/>
<ellipse cx="250" cy="680" rx="22" ry="30" fill="#3a2a5a" stroke-width="3"/>
<ellipse cx="295" cy="700" rx="28" ry="10" fill="#aaa" stroke-width="3"/>
</g>
<!-- caster 3 -->
<polygon points="1608,572 1700,560 1715,590 1640,604" fill="#25a3a3" stroke-width="3"/>
<polygon points="1648,604 1685,600 1688,650 1650,652" fill="#b09a9a" stroke-width="3"/>
<ellipse cx="1665" cy="660" rx="30" ry="11" fill="#bbb" stroke-width="3"/>
<ellipse cx="1742" cy="620" rx="32" ry="36" fill="#ddd" stroke-width="3"/><ellipse cx="1735" cy="620" rx="22" ry="28" fill="#8a8aa0" stroke-width="3"/>
<polygon points="1690,590 1720,585 1740,640 1705,640" fill="#1e9e9e" stroke-width="3"/>
<path d="M1685,610 Q1690,640 1705,650" stroke="#8a2be2" stroke-width="8" fill="none"/>
<!-- white tube + clamp -->
<polygon points="1672,25 1730,25 1742,528 1690,530" fill="#f3f3f3"/>
<line x1="1718" y1="30" x2="1730" y2="525" stroke="#bbb" stroke-width="10"/>
<polygon points="1690,530 1742,528 1740,560 1695,562" fill="#c8c8d8" stroke-width="3"/>
<rect x="1700" y="562" width="34" height="40" fill="#a8a8c0" stroke-width="3"/>
<rect x="1698" y="536" width="30" height="12" fill="#e89010" stroke-width="2"/>
<polygon points="1750,455 1775,455 1775,500 1770,560 1755,560 1752,500" fill="#2080b0" stroke-width="3"/>
</g>
<!-- ===== table + valve: Z3 coords (1040,630) scale 1/6 ===== -->
<g transform="translate(1040,630) scale(0.166667)" stroke-linejoin="round" stroke="#111" stroke-width="6">
<!-- apron under table -->
<polygon points="265,500 1560,258 1562,350 1075,432 300,578" fill="#9a9a9a"/>
<polygon points="268,468 1560,208 1560,260 268,502" fill="#e4e4e4" stroke-width="5"/>
<line x1="270" y1="480" x2="1560" y2="222" stroke="#111" stroke-width="5" stroke-dasharray="30 8"/>
<line x1="270" y1="492" x2="1560" y2="240" stroke="#fff" stroke-width="6"/>
<!-- table plate -->
<polygon points="95,452 1600,160 1602,212 105,496" fill="#565656"/>
<!-- left apron (A-D direction) piece behind leg 2 -->
<polygon points="-20,470 100,470 268,470 268,505 130,500 -20,540" fill="#e8e8e8" stroke-width="4"/>
<!-- valve (placeholder; drawn in separate group) -->
</g>
<!-- ===== valve: Z6 coords (1270,625) scale 100/1310 ===== -->
<g transform="translate(1270,625) scale(0.076336)" stroke-linejoin="round" stroke="#111" stroke-width="13">
<polygon points="480,165 740,130 745,330 520,420 485,400" fill="#787878"/>
<circle cx="552" cy="235" r="20" fill="#e8e8e8" stroke-width="9"/>
<!-- silencer -->
<polygon points="75,770 400,510 500,645 185,920" fill="#cdb1b0"/>
<polygon points="130,850 455,590 500,645 185,920" fill="#b39897" stroke="none"/>
<polygon points="75,770 120,755 215,890 185,920 130,880" fill="#d8bcbc" stroke-width="9"/>
<g fill="#1a1a1a" stroke="none"><circle cx="175" cy="715" r="14"/><circle cx="240" cy="665" r="14"/><circle cx="345" cy="660" r="14"/><circle cx="240" cy="735" r="14"/><circle cx="325" cy="750" r="14"/><circle cx="405" cy="700" r="14"/><circle cx="255" cy="805" r="14"/><circle cx="320" cy="610" r="12"/></g>
<polygon points="400,510 440,480 545,610 500,645" fill="#e4e4e4" stroke-width="9"/>
<!-- nut -->
<polygon points="390,790 450,760 600,765 625,830 585,895 450,900 400,860" fill="#8f90b6"/>
<line x1="500" y1="765" x2="505" y2="898" stroke="#555" stroke-width="9"/>
<!-- orange fitting -->
<polygon points="620,645 780,640 785,760 775,985 630,990 618,760" fill="#e8900c"/>
<g stroke="#3a2000" stroke-width="11" fill="none"><line x1="622" y1="700" x2="782" y2="695"/><line x1="625" y1="900" x2="780" y2="895"/><polygon points="660,760 740,815 665,870"/></g>
<!-- brass body: vertical + diagonal -->
<polygon points="600,245 690,225 770,235 785,640 615,648" fill="#8d8d12"/>
<polygon points="440,520 560,350 850,255 905,330 880,400 640,600 520,650" fill="#94940f"/>
<polygon points="520,650 640,600 880,400 905,330 900,380 650,640 545,690" fill="#6a6a08" stroke="none"/>
<polygon points="640,330 700,380 770,330 790,370 740,430 790,500 745,530 700,470 650,530 615,495 665,420 610,370" fill="#7a7a0c" stroke-width="8"/>
<g stroke="#222" stroke-width="9"><line x1="475" y1="490" x2="560" y2="610"/><line x1="520" y1="450" x2="600" y2="570"/><line x1="790" y1="280" x2="850" y2="390"/></g>
<circle cx="835" cy="480" r="26" fill="#8d8d12" stroke-width="9"/>
<!-- red knob -->
<polygon points="850,255 960,180 1010,245 905,330" fill="#d81c1c"/>
<g stroke="#7a0000" stroke-width="9"><line x1="885" y1="232" x2="935" y2="305"/><line x1="915" y1="212" x2="965" y2="282"/></g>
<polygon points="960,180 1030,130 1060,175 1000,225" fill="#e02020" stroke-width="9"/>
<ellipse cx="1058" cy="160" rx="48" ry="88" transform="rotate(-38 1058 160)" fill="#e21e1e"/>
<ellipse cx="1040" cy="170" rx="20" ry="40" transform="rotate(-38 1040 170)" fill="#f04040" stroke="none"/>
</g>
<!-- ===== pneumatics upper: Z4 (1165,330) scale 160/1397 ===== -->
<g transform="translate(1165,330) scale(0.11453)" stroke-linejoin="round" stroke="#111" stroke-width="7">
<!-- manifold -->
<polygon points="135,130 440,70 570,150 575,290 290,360 135,300" fill="#8c8c94"/>
<polygon points="135,130 440,70 570,150 280,215" fill="#b4b4c0" stroke-width="5"/>
<polygon points="135,130 280,215 290,360 135,300" fill="#b4b4c2" stroke-width="5"/>
<polygon points="80,390 280,340 660,300 660,430 290,500 85,510" fill="#8a8a92"/>
<polygon points="80,390 280,340 290,500 85,510" fill="#b2b2c0" stroke-width="5"/>
<polygon points="280,340 660,300 655,345 285,390" fill="#b6b6c2" stroke-width="5"/>
<polygon points="85,590 290,520 665,500 660,600 560,640 550,720 250,770 160,770 90,660" fill="#8a8a92"/>
<polygon points="85,590 290,520 295,690 250,770 160,770 90,660" fill="#b4b4c2" stroke-width="5"/>
<polygon points="290,520 665,500 660,545 292,570" fill="#b6b6c2" stroke-width="5"/>
<polygon points="300,600 560,560 555,640 305,680" fill="#9c9ca6" stroke-width="5"/>
<polygon points="300,410 540,375 540,430 300,470" fill="#9c9ca6" stroke-width="5"/>
<g fill="#222" stroke="none"><circle cx="585" cy="365" r="12"/><circle cx="625" cy="360" r="12"/><circle cx="585" cy="430" r="12"/><circle cx="625" cy="425" r="12"/><circle cx="590" cy="560" r="12"/><circle cx="630" cy="555" r="12"/><circle cx="200" cy="260" r="16"/><circle cx="240" cy="290" r="14"/><circle cx="150" cy="450" r="16"/><circle cx="205" cy="470" r="14"/><circle cx="150" cy="640" r="16"/><circle cx="205" cy="660" r="14"/><circle cx="400" cy="660" r="10"/><circle cx="440" cy="560" r="10"/></g>
<polygon points="185,140 400,95 420,130 200,175" fill="#707078" stroke-width="4"/>
<g stroke="#111" stroke-width="6" fill="none">
<line x1="140" y1="215" x2="285" y2="290"/><line x1="285" y1="290" x2="572" y2="220"/>
<line x1="85" y1="450" x2="285" y2="420"/><line x1="288" y1="445" x2="658" y2="385"/>
<line x1="88" y1="625" x2="292" y2="585"/><line x1="295" y1="630" x2="660" y2="560"/>
<line x1="420" y1="150" x2="425" y2="330"/><line x1="470" y1="330" x2="475" y2="490"/><line x1="470" y1="520" x2="470" y2="730"/>
</g>
<g fill="#6e6e76" stroke="#111" stroke-width="5">
<ellipse cx="120" cy="440" rx="30" ry="34"/><ellipse cx="120" cy="640" rx="30" ry="34"/><ellipse cx="180" cy="690" rx="26" ry="30"/><ellipse cx="185" cy="480" rx="24" ry="28"/>
<rect x="330" y="240" width="110" height="40" transform="rotate(-12 330 240)"/><rect x="180" y="220" width="60" height="50" transform="rotate(20 180 220)"/>
</g>
<g fill="#e8e8f0" stroke="none"><rect x="95" y="410" width="22" height="22"/><rect x="98" y="610" width="22" height="22"/><rect x="150" y="500" width="18" height="18"/><rect x="300" y="590" width="26" height="60"/><rect x="295" y="395" width="26" height="60"/></g>

<!-- silencers + fitting under manifold -->
<polygon points="210,790 292,780 295,940 220,952" fill="#c2a4a4" stroke-width="5"/>
<polygon points="370,765 415,760 418,915 375,920" fill="#c2a4a4" stroke-width="5"/>
<polygon points="298,780 372,775 380,940 302,945" fill="#e8900c" stroke-width="5"/>
<circle cx="345" cy="865" r="28" fill="#d07a08" stroke-width="5"/>
<rect x="375" y="885" width="32" height="45" fill="#f2f2f2" stroke-width="4"/>
<polygon points="308,945 370,940 372,1000 312,1005" fill="#c8a8a8" stroke-width="5"/>
<g fill="#333" stroke="none"><circle cx="235" cy="830" r="6"/><circle cx="262" cy="870" r="6"/><circle cx="238" cy="905" r="6"/><circle cx="392" cy="800" r="5"/><circle cx="395" cy="850" r="5"/></g>
<!-- solenoid valve -->
<polygon points="740,480 1055,470 1060,700 850,770 800,700 745,690" fill="#7e7e7e"/>
<polygon points="740,480 800,475 850,770 800,700 745,690" fill="#9a9a9a" stroke-width="5"/>
<polygon points="850,235 985,228 1000,440 930,470 820,470 830,330" fill="#5e5e5e"/>
<polygon points="860,240 940,236 940,330 865,335" fill="#787878" stroke-width="5"/>
<polygon points="755,315 800,312 805,430 758,432" fill="#1e7a3a" stroke-width="5"/><rect x="750" y="300" width="55" height="40" fill="#181818" stroke="none"/>
<polygon points="1015,262 1062,260 1068,380 1018,382" fill="#1e7a3a" stroke-width="5"/><rect x="1012" y="245" width="55" height="40" fill="#181818" stroke="none"/>
<circle cx="905" cy="570" r="48" fill="#444" stroke-width="5"/><line x1="870" y1="590" x2="915" y2="530" stroke="#ddd" stroke-width="8"/><line x1="890" y1="540" x2="930" y2="600" stroke="#aaa" stroke-width="6"/>
<polygon points="685,565 760,560 765,625 740,680 695,680" fill="#c8a8a8" stroke-width="5"/>
<polygon points="860,725 940,715 945,760 865,768" fill="#b09a9a" stroke-width="5"/>
<circle cx="715" cy="515" r="18" fill="#222" stroke="none"/>
<!-- orange fitting + long silencer -->
<path d="M960,575 Q965,535 1010,540 Q1075,545 1078,620 L1082,765 L985,768 L985,640 Q960,620 960,575 Z" fill="#f0940c"/>
<line x1="985" y1="650" x2="1080" y2="645" stroke="#4a2a00" stroke-width="7"/><line x1="985" y1="690" x2="1082" y2="686" stroke="#4a2a00" stroke-width="7"/><line x1="985" y1="730" x2="1082" y2="726" stroke="#4a2a00" stroke-width="7"/>
<polygon points="962,772 1105,765 1108,805 965,810" fill="#9a9a9a" stroke-width="5"/>
<polygon points="968,810 1105,805 1110,1065 975,1070" fill="#c0a4a4"/>
<g fill="#333" stroke="none"><circle cx="1015" cy="880" r="8"/><circle cx="1065" cy="895" r="8"/><circle cx="1018" cy="940" r="8"/><circle cx="1068" cy="985" r="8"/><circle cx="1020" cy="1000" r="8"/><circle cx="1070" cy="1040" r="8"/></g>
<path d="M770,1030 h60 v20 h-60 z" fill="#c02020" stroke="#111" stroke-width="5"/>
</g>
<!-- ===== pneumatics lower: Z5 (1165,440) scale ===== -->
<g transform="translate(1165,440) scale(0.11453)" stroke-linejoin="round" stroke="#111" stroke-width="7">
<!-- pressure switch -->
<polygon points="735,120 828,118 832,285 740,290" fill="#ececec"/>
<rect x="800" y="125" width="22" height="160" fill="#bbb" stroke="none"/>
<polygon points="728,70 820,62 826,125 735,130" fill="#5a5430"/><rect x="760" y="78" width="52" height="22" fill="#d02020" stroke="none"/>
<circle cx="812" cy="170" r="20" fill="#111" stroke="none"/><circle cx="806" cy="165" r="7" fill="#fff" stroke="none"/>
<polygon points="745,290 825,286 822,330 750,334" fill="#ddd" stroke-width="5"/>
<polygon points="752,334 818,330 818,362 755,365" fill="#222" stroke="none"/>
<!-- green glow -->
<path d="M812,295 Q898,290 895,350 Q892,412 812,412 Z" fill="#5fd95f" stroke="none"/>
<!-- orange elbow -->
<polygon points="750,362 820,358 822,470 700,482 600,478 598,420 660,398 748,400" fill="#e88c10"/>
<g stroke="#4a2a00" stroke-width="7"><line x1="640" y1="410" x2="645" y2="478"/><line x1="690" y1="400" x2="695" y2="480"/><line x1="740" y1="405" x2="748" y2="475"/><line x1="790" y1="400" x2="796" y2="470"/></g>
<!-- connector -->
<polygon points="655,302 715,298 718,385 658,388" fill="#4a4a4a" stroke-width="5"/><rect x="668" y="322" width="42" height="30" fill="#c8a0a0" stroke="none"/>
<polygon points="480,350 520,345 535,385 485,392" fill="#222" stroke="none"/>
<!-- body -->
<polygon points="180,470 335,455 445,425 560,420 600,440 605,520 570,560 560,600 200,610 180,560" fill="#9c9c9c"/>
<polygon points="182,455 330,448 335,480 185,486" fill="#77773e" stroke-width="5"/>
<polygon points="440,412 560,408 600,440 605,520 585,525 575,450 445,445" fill="#77773e" stroke-width="5"/>
<rect x="205" y="495" width="50" height="22" fill="#fff" stroke="none"/><rect x="340" y="470" width="40" height="20" fill="#fff" stroke="none"/><rect x="455" y="448" width="35" height="20" fill="#fff" stroke="none"/>
<circle cx="455" cy="545" r="72" fill="#77773e" stroke-width="5"/><circle cx="468" cy="548" r="58" fill="#8c8c8c" stroke-width="5"/>
<polygon points="205,520 240,520 240,610 205,610" fill="#77773e" stroke-width="5"/>
<!-- left fitting -->
<polygon points="120,465 182,470 182,600 150,680 125,670" fill="#8686a0" stroke-width="5"/><circle cx="160" cy="538" r="9" fill="#e08020" stroke="none"/>
<!-- blue knob -->
<polygon points="315,300 430,298 432,410 380,430 318,415" fill="#1f78c0"/>
<path d="M300,285 Q365,250 435,285 L432,320 Q365,300 302,320 Z" fill="#162030"/>
<path d="M345,310 L348,385 M385,305 L378,385" stroke="#0a2a50" stroke-width="8" fill="none"/>
<polygon points="300,410 435,405 440,440 300,445" fill="#222" stroke="none"/>
<!-- bowls -->
<polygon points="195,612 335,605 338,895 272,948 208,895" fill="#ebebeb"/>
<polygon points="440,585 568,580 572,850 505,898 445,850" fill="#ebebeb"/>
<g stroke="#222" stroke-width="8"><line x1="235" y1="630" x2="238" y2="720"/><line x1="300" y1="628" x2="302" y2="720"/><line x1="202" y1="735" x2="335" y2="728"/><line x1="300" y1="760" x2="300" y2="880"/><line x1="475" y1="600" x2="478" y2="690"/><line x1="540" y1="598" x2="542" y2="690"/><line x1="442" y1="705" x2="570" y2="698"/><line x1="535" y1="730" x2="535" y2="830"/></g>
<polygon points="232,905 312,900 272,950" fill="#222" stroke="none"/><polygon points="470,855 540,850 506,900" fill="#222" stroke="none"/>
<rect x="310" y="0" width="60" height="48" fill="#c8a8a8" stroke-width="5"/>
</g>
<!-- small axis at model base -->
<g>
<line x1="1066" y1="869.5" x2="1053" y2="865" stroke="#18c040" stroke-width="2"/>
<polygon points="1049,863.5 1056,862.5 1055,868.5" fill="#18c040"/>
<text x="1041" y="867" font-family="Liberation Sans, sans-serif" font-size="10" fill="#e01010">Y</text>
<line x1="1098" y1="872.2" x2="1115" y2="870" stroke="#e01010" stroke-width="1.2" stroke-dasharray="3 2"/>
</g>
<!-- watermark -->
<defs><linearGradient id="wm" x1="0" y1="0" x2="1" y2="1"><stop offset="0" stop-color="#f59a1c"/><stop offset="1" stop-color="#ee6a1e"/></linearGradient></defs>
<g transform="translate(880,500) scale(0.083333)" fill="url(#wm)" stroke="none" opacity="0.92">
<polygon points="130,205 160,205 160,440 130,440"/>
<polygon points="178,140 212,150 212,430 178,415"/>
<polygon points="232,95 270,130 270,415 232,380"/>
<polygon points="130,445 300,445 345,470 130,478"/>
<path d="M290,250 Q300,140 400,118 L385,150 Q345,200 352,270 L322,300 Z"/>
<path d="M352,200 Q420,190 420,330 Q470,330 520,180 L540,210 Q520,400 420,415 Q360,400 375,250 Z"/>
<polygon points="560,100 590,85 590,420 560,440"/>
<polygon points="605,150 632,138 632,440 605,450"/>
<polygon points="645,205 668,205 668,470 645,470"/>
<polygon points="345,470 400,450 470,470 668,445 668,478 345,480"/>
</g>
<text x="946.5" y="529.5" font-family="Liberation Sans, sans-serif" font-size="16.4" font-weight="bold" fill="#f28a2a" opacity="0.95">智造资料网</text>
<text x="947" y="538.3" font-family="Liberation Sans, sans-serif" font-size="4.6" font-weight="bold" font-style="italic" fill="#f0902c" textLength="81" lengthAdjust="spacingAndGlyphs">INTELLIGENT MANUFACTURING DATA</text>
<!-- big axis triad bottom-left : coords of 4.5975x zoom of [0,820] -->
<g transform="translate(0,820) scale(0.21751)">
<polygon points="485,425 548,445 550,552 487,527" fill="#9aa6cc" fill-opacity="0.45" stroke="#d8d8d8" stroke-width="3"/>
<polygon points="548,445 648,430 652,536 550,552" fill="#9aa6cc" fill-opacity="0.45" stroke="#d8d8d8" stroke-width="3"/>
<polygon points="500,532 582,514 652,536 560,556" fill="#d8d838" stroke="none"/>
<line x1="550" y1="560" x2="542" y2="270" stroke="#10d8e4" stroke-width="13"/>
<polygon points="520,275 540,225 560,272" fill="#30e8f0"/>
<line x1="550" y1="560" x2="450" y2="527" stroke="#18c818" stroke-width="12"/>
<polygon points="425,520 462,508 458,540" fill="#10b010"/>
<line x1="550" y1="560" x2="650" y2="542" stroke="#e01818" stroke-width="12"/>
<polygon points="688,538 645,522 650,560" fill="#d01010"/>
<circle cx="552" cy="560" r="19" fill="#808080"/><circle cx="547" cy="554" r="7" fill="#b0b0b0"/>
<text x="512" y="215" font-family="Liberation Sans, sans-serif" font-size="50" fill="#e0e0e0">Z</text>
<text x="385" y="527" font-family="Liberation Sans, sans-serif" font-size="50" fill="#e01818">Y</text>
<text x="692" y="545" font-family="Liberation Sans, sans-serif" font-size="50" fill="#e01818">X</text>
</g>
</svg>
<svg class="abs" style="left:0;top:0" width="1920" height="1048" viewBox="0 0 1920 1048">
<defs><linearGradient id="cylb" x1="0" y1="0" x2="1" y2="0"><stop offset="0" stop-color="#8ab0f0"/><stop offset="0.45" stop-color="#3a68c0"/><stop offset="1" stop-color="#1a3a88"/></linearGradient></defs>
<g transform="translate(33,78) scale(1)">
<polygon points="-9,-8 2,-9 6,-6 -5,-5" fill="#5a78d8"/><polygon points="-9,-5.5 2,-6.5 6,-3.5 -5,-2.5" fill="#e8ecf8"/><polygon points="-9,-3 2,-4 6,-1 -5,0" fill="#8aa0e0"/><polygon points="-9,-0.5 2,-1.5 6,1.5 -5,2.5" fill="#f4f4f8" stroke="#889" stroke-width="0.4"/>
<ellipse cx="0" cy="5" rx="8.5" ry="4.5" fill="#b88a68" stroke="#6a4a38" stroke-width="0.7"/><circle cx="-4" cy="5" r="1.8" fill="#2050d0"/><circle cx="0" cy="6.5" r="1.8" fill="#20a030"/><circle cx="3.5" cy="3.5" r="1.8" fill="#d02020"/>
<line x1="9" y1="-9" x2="3" y2="2" stroke="#b06820" stroke-width="1.8"/><line x1="3.5" y1="1" x2="1.5" y2="4.5" stroke="#333" stroke-width="2"/>
</g>
<g transform="translate(58,78) scale(1)">
<rect x="-2" y="-10" width="11" height="13" fill="#dfe8fa" stroke="#333" stroke-width="0.8"/><rect x="-7" y="-6" width="9" height="9" fill="#3a64c0" stroke="#223" stroke-width="0.8"/>
<path d="M-9,5 Q0,-3 9,5 Q0,10 -9,5 Z" fill="#9aa4c4" stroke="#3c4668" stroke-width="0.8"/>
<circle cx="0" cy="4.5" r="3.2" fill="#2a3860"/><circle cx="-1" cy="3.5" r="1" fill="#c8d4f0"/>
<path d="M-9,5 Q0,-4 9,5" fill="none" stroke="#2a3050" stroke-width="1.6"/>
</g>
<g transform="translate(84,78) scale(1)">
<path d="M-9,-4 Q0,-12 9,-4 Q0,1 -9,-4 Z" fill="#9aa4c4" stroke="#3c4668" stroke-width="0.8"/>
<circle cx="0" cy="-4.5" r="3.2" fill="#2a3860"/><circle cx="-1" cy="-5.5" r="1" fill="#c8d4f0"/>
<path d="M-9,-4 Q0,-13 9,-4" fill="none" stroke="#2a3050" stroke-width="1.6"/>
<path d="M-8.5,5 h7 M-5,1.5 v7" stroke="#6fe028" stroke-width="2.2" fill="none"/>
<path d="M1,5 q5,-4 6,1 q0,4 -5,5" stroke="#3a78d0" stroke-width="1.8" fill="none"/><polygon points="-0.5,2.5 3.5,4.5 0.5,7.5" fill="#3a78d0"/>
</g>
<g transform="translate(110,78) scale(1)">
<path d="M-9,-4 Q0,-12 9,-4 Q0,1 -9,-4 Z" fill="#9aa4c4" stroke="#3c4668" stroke-width="0.8"/>
<circle cx="0" cy="-4.5" r="3.2" fill="#2a3860"/><circle cx="-1" cy="-5.5" r="1" fill="#c8d4f0"/>
<path d="M-9,-4 Q0,-13 9,-4" fill="none" stroke="#2a3050" stroke-width="1.6"/>
<path d="M-8,5 h8" stroke="#e6e200" stroke-width="2.4" fill="none"/>
<path d="M2,5 q5,-4 6,1 q0,4 -5,5" stroke="#3a78d0" stroke-width="1.8" fill="none"/><polygon points="0.5,2.5 4.5,4.5 1.5,7.5" fill="#3a78d0"/>
</g>
<g transform="translate(136,78) scale(1)">
<path d="M-9,-5 Q0,-13 9,-5 Q0,0 -9,-5 Z" fill="#9aa4c4" stroke="#3c4668" stroke-width="0.8"/>
<circle cx="0" cy="-5.5" r="3.2" fill="#2a3860"/><circle cx="-1" cy="-6.5" r="1" fill="#c8d4f0"/>
<path d="M-9,-5 Q0,-14 9,-5" fill="none" stroke="#2a3050" stroke-width="1.6"/>
<rect x="-8.2" y="-3" width="6.5" height="12" rx="2" fill="#111"/>
<circle cx="-5" cy="0.2" r="2.2" fill="#e8d020"/><circle cx="-5" cy="5.8" r="2.2" fill="#20c020"/>
<rect x="1.8" y="-3" width="6.5" height="12" rx="2" fill="#111"/>
<circle cx="5" cy="0.2" r="2.2" fill="#e02020"/><circle cx="5" cy="5.8" r="2.2" fill="#e8c020"/>
</g>
<g transform="translate(162,78) scale(1)">
<path d="M-9,-5 Q0,-13 9,-5 Q0,0 -9,-5 Z" fill="#9aa4c4" stroke="#3c4668" stroke-width="0.8"/>
<circle cx="0" cy="-5.5" r="3.2" fill="#2a3860"/><circle cx="-1" cy="-6.5" r="1" fill="#c8d4f0"/>
<path d="M-9,-5 Q0,-14 9,-5" fill="none" stroke="#2a3050" stroke-width="1.6"/>
<path d="M-5.5,3.5 a5.5,5.5 0 0 1 9.5,-2" stroke="#58b828" stroke-width="2.6" fill="none"/>
<polygon points="1.5,2.5 8.5,1.5 5,7" fill="#58b828"/>
<path d="M5.5,4.5 a5.5,5.5 0 0 1 -9.5,2" stroke="#e0d020" stroke-width="2.6" fill="none"/>
<polygon points="-1.5,5.5 -8.5,6.5 -5,1" fill="#e0d020"/>
</g>
<g transform="translate(188,78) scale(1)">
<path d="M-9,-4 Q0,-12 9,-4 Q0,1 -9,-4 Z" fill="#9aa4c4" stroke="#3c4668" stroke-width="0.8"/>
<circle cx="0" cy="-4.5" r="3.2" fill="#2a3860"/><circle cx="-1" cy="-5.5" r="1" fill="#c8d4f0"/>
<path d="M-9,-4 Q0,-13 9,-4" fill="none" stroke="#2a3050" stroke-width="1.6"/>
<path d="M-8.5,3.5 h7 M-5,0 v7" stroke="#6fe028" stroke-width="2.2" fill="none"/>
<line x1="-2" y1="9" x2="3" y2="1" stroke="#222" stroke-width="1.2"/>
<path d="M2,8.5 h8" stroke="#e6e200" stroke-width="2.4" fill="none"/>
</g>
<g transform="translate(214,78) scale(1)">
<path d="M-9,-4 Q0,-12 9,-4 Q0,1 -9,-4 Z" fill="#9aa4c4" stroke="#3c4668" stroke-width="0.8"/>
<circle cx="0" cy="-4.5" r="3.2" fill="#2a3860"/><circle cx="-1" cy="-5.5" r="1" fill="#c8d4f0"/>
<path d="M-9,-4 Q0,-13 9,-4" fill="none" stroke="#2a3050" stroke-width="1.6"/>
<path d="M-3.5,5 h9 M1,0.5 v9" stroke="#6fe028" stroke-width="2.6" fill="none"/>
</g>
<g transform="translate(240,78) scale(1)">
<path d="M-9,-4 Q0,-12 9,-4 Q0,1 -9,-4 Z" fill="#9aa4c4" stroke="#3c4668" stroke-width="0.8"/>
<circle cx="0" cy="-4.5" r="3.2" fill="#2a3860"/><circle cx="-1" cy="-5.5" r="1" fill="#c8d4f0"/>
<path d="M-9,-4 Q0,-13 9,-4" fill="none" stroke="#2a3050" stroke-width="1.6"/>
<path d="M-2,4.5 h10" stroke="#e6e200" stroke-width="2.4" fill="none"/>
</g>
<g transform="translate(283.3,78) scale(1)">
<path d="M-6.5,0 a6.5,6.5 0 0 1 11.5,-2" stroke="#5a92d8" stroke-width="3.6" fill="none"/>
<polygon points="2.5,-1 9.5,-2 6,3.5" fill="#5a92d8"/>
<path d="M6.5,1 a6.5,6.5 0 0 1 -11.5,2" stroke="#7ab0e8" stroke-width="3.6" fill="none"/>
<polygon points="-2.5,2 -9.5,3 -6,-2.5" fill="#7ab0e8"/>
</g>
<g transform="translate(310.4,78) scale(1)">
<path d="M-5.7,-6.6 v13.2 a5.7,2.2 0 0 0 11.4,0 v-13.2" fill="none" stroke="#222" stroke-width="1.1"/>
<ellipse cx="0" cy="-6.6" rx="5.7" ry="2.2" fill="none" stroke="#222" stroke-width="1.1"/>
<path d="M-5.7,6.6 a5.7,2.2 0 0 1 11.4,0" fill="none" stroke="#222" stroke-width="0.7"/>
</g>
<g transform="translate(336.6,78) scale(1)">
<path d="M-5.7,-6.6 v13.2 a5.7,2.2 0 0 0 11.4,0 v-13.2" fill="none" stroke="#222" stroke-width="1.1"/>
<ellipse cx="0" cy="-6.6" rx="5.7" ry="2.2" fill="none" stroke="#222" stroke-width="1.1"/>
<path d="M-5.7,6.6 a5.7,2.2 0 0 1 11.4,0" fill="none" stroke="#222" stroke-width="0.7"/>
</g>
<g transform="translate(362,78) scale(1)">
<path d="M-5.7,-6.6 v13.2 a5.7,2.2 0 0 0 11.4,0 v-13.2" fill="none" stroke="#222" stroke-width="1.1"/>
<ellipse cx="0" cy="-6.6" rx="5.7" ry="2.2" fill="none" stroke="#222" stroke-width="1.1"/>
<path d="M-5.7,6.6 a5.7,2.2 0 0 1 11.4,0" fill="none" stroke="#222" stroke-width="0.7"/>
</g>
<g transform="translate(388.3,78) scale(1)">
<ellipse cx="4" cy="7.1" rx="6.7" ry="2" fill="#000" opacity="0.35"/>
<path d="M-5.7,-6.6 v13.2 a5.7,2.2 0 0 0 11.4,0 v-13.2" fill="url(#cylb)" stroke="#20d8f0" stroke-width="1.3"/>
<ellipse cx="0" cy="-6.6" rx="5.7" ry="2.2" fill="#7aa8e8" stroke="#20d8f0" stroke-width="1.3"/>
</g>
<g transform="translate(412.9,78) scale(1)">
<ellipse cx="4" cy="7.1" rx="6.7" ry="2" fill="#000" opacity="0.35"/>
<path d="M-5.7,-6.6 v13.2 a5.7,2.2 0 0 0 11.4,0 v-13.2" fill="url(#cylb)" stroke="#101828" stroke-width="1.1"/>
<ellipse cx="0" cy="-6.6" rx="5.7" ry="2.2" fill="#4a78c8" stroke="#101828" stroke-width="1.1"/>
</g>
<g transform="translate(439.9,78) scale(1)">
<ellipse cx="4" cy="7.1" rx="6.7" ry="2" fill="#000" opacity="0.35"/>
<path d="M-5.7,-6.6 v13.2 a5.7,2.2 0 0 0 11.4,0 v-13.2" fill="#dfe8f6" stroke="#30d8f0" stroke-width="1.2"/>
<ellipse cx="0" cy="-6.6" rx="5.7" ry="2.2" fill="#eef4fc" stroke="#30d8f0" stroke-width="1.2"/>
</g>
<g transform="translate(466.1,78) scale(1)">
<ellipse cx="4" cy="7.1" rx="6.7" ry="2" fill="#000" opacity="0.35"/>
<path d="M-5.7,-6.6 v13.2 a5.7,2.2 0 0 0 11.4,0 v-13.2" fill="#d4e0f4" stroke="#334" stroke-width="1"/>
<ellipse cx="0" cy="-6.6" rx="5.7" ry="2.2" fill="#e8f0fa" stroke="#334" stroke-width="1"/>
</g>
<g transform="translate(492.4,78) scale(1)">
<path d="M-5.7,-6.6 v13.2 a5.7,2.2 0 0 0 11.4,0 v-13.2" fill="none" stroke="#222" stroke-width="1.1"/>
<ellipse cx="0" cy="-6.6" rx="5.7" ry="2.2" fill="none" stroke="#222" stroke-width="1.1"/>
<path d="M-5.7,6.6 a5.7,2.2 0 0 1 11.4,0" fill="none" stroke="#222" stroke-width="0.7"/>
<path d="M-5,-7 L-1,9 L2,-6 L5,9 M-5,8 L-2,-6 M5,-7 L1,9" stroke="#222" stroke-width="0.7" fill="none"/>
</g>
<g transform="translate(517.8,78) scale(1)">
<path d="M-7.5,-9 v12 a4.5,2.2 0 0 0 9,0 v-12" fill="#f4f4f8" stroke="#222" stroke-width="1.1"/>
<ellipse cx="-3" cy="-9" rx="4.5" ry="2.2" fill="#f4f4f8" stroke="#222" stroke-width="1.1"/>
<path d="M-0.5,-3 v12 a4.5,2.2 0 0 0 9,0 v-12" fill="url(#cylb)" stroke="#123" stroke-width="1.1"/>
<ellipse cx="4" cy="-3" rx="4.5" ry="2.2" fill="#4a78c8" stroke="#123" stroke-width="1.1"/>
<path d="M2,-9 q5,-2 6,3" stroke="#30b030" stroke-width="2" fill="none"/><path d="M-3,9 q-5,1 -6,-3" stroke="#30b030" stroke-width="2" fill="none"/>
</g>
<g transform="translate(544,78) scale(1)">
<path d="M-7,-8 v14 a5,2.2 0 0 0 10,0 v-14" fill="url(#cylb)" stroke="#123" stroke-width="1.1"/>
<ellipse cx="-2" cy="-8" rx="5" ry="2.2" fill="#4a78c8" stroke="#123" stroke-width="1.1"/>
<path d="M1,4 a4,4 0 0 1 6.5,-2" stroke="#4a88d8" stroke-width="2.4" fill="none"/>
<polygon points="5,3 12,2 8.5,7.5" fill="#4a88d8"/>
<path d="M9,5 a4,4 0 0 1 -6.5,2" stroke="#4a88d8" stroke-width="2.4" fill="none"/>
<polygon points="5,6 -2,7 1.5,1.5" fill="#4a88d8"/>
</g>
<g transform="translate(569.4,78) scale(1)">
<rect x="-9" y="-8" width="15" height="12" fill="#223a70" stroke="#667" stroke-width="1"/><rect x="-4" y="4" width="6" height="3" fill="#889"/>
<line x1="-6" y1="-6" x2="8" y2="8" stroke="#d8dce8" stroke-width="2.6"/><line x1="8" y1="-7" x2="-5" y2="7" stroke="#4a88d8" stroke-width="2.6"/><circle cx="8" cy="-7" r="2.5" fill="#b8c4d8"/>
</g>
<g transform="translate(612.7,78) scale(1)">
<polygon points="-4,-8.5 0.5,-6.25 -4,-4 -8.5,-6.25" fill="#e8e8e8" stroke="#333" stroke-width="0.8"/>
<polygon points="-8.5,-6.25 -4,-4 -4,0.5 -8.5,-1.75" fill="#b8b8b8" stroke="#333" stroke-width="0.8"/>
<polygon points="0.5,-6.25 -4,-4 -4,0.5 0.5,-1.75" fill="#888" stroke="#333" stroke-width="0.8"/>
<polygon points="4.5,-8.5 9,-6.25 4.5,-4 0,-6.25" fill="#f4f4f4" stroke="#333" stroke-width="0.8"/>
<polygon points="0,-6.25 4.5,-4 4.5,0.5 0,-1.75" fill="#ddd" stroke="#333" stroke-width="0.8"/>
<polygon points="9,-6.25 4.5,-4 4.5,0.5 9,-1.75" fill="#bbb" stroke="#333" stroke-width="0.8"/>
<path d="M-8.5,5 h7 M-5,1.5 v7" stroke="#6fe028" stroke-width="2.2" fill="none"/>
<path d="M2,5 q5,-4 6,1 q0,4 -5,5" stroke="#3a78d0" stroke-width="1.8" fill="none"/><polygon points="0.5,2.5 4.5,4.5 1.5,7.5" fill="#3a78d0"/>
</g>
<g transform="translate(638.3,78) scale(1)">
<polygon points="-4,-8.5 0.5,-6.25 -4,-4 -8.5,-6.25" fill="#e8e8e8" stroke="#333" stroke-width="0.8"/>
<polygon points="-8.5,-6.25 -4,-4 -4,0.5 -8.5,-1.75" fill="#b8b8b8" stroke="#333" stroke-width="0.8"/>
<polygon points="0.5,-6.25 -4,-4 -4,0.5 0.5,-1.75" fill="#888" stroke="#333" stroke-width="0.8"/>
<polygon points="4.5,-8.5 9,-6.25 4.5,-4 0,-6.25" fill="#f4f4f4" stroke="#333" stroke-width="0.8"/>
<polygon points="0,-6.25 4.5,-4 4.5,0.5 0,-1.75" fill="#ddd" stroke="#333" stroke-width="0.8"/>
<polygon points="9,-6.25 4.5,-4 4.5,0.5 9,-1.75" fill="#bbb" stroke="#333" stroke-width="0.8"/>
<rect x="-8.2" y="-3" width="6.5" height="12" rx="2" fill="#111"/>
<circle cx="-5" cy="0.2" r="2.2" fill="#e8d020"/><circle cx="-5" cy="5.8" r="2.2" fill="#20c020"/>
<rect x="1.8" y="-3" width="6.5" height="12" rx="2" fill="#111"/>
<circle cx="5" cy="0.2" r="2.2" fill="#e02020"/><circle cx="5" cy="5.8" r="2.2" fill="#e8c020"/>
</g>
<g transform="translate(664.8,78) scale(1)">
<polygon points="-4,-8.5 0.5,-6.25 -4,-4 -8.5,-6.25" fill="#e8e8e8" stroke="#333" stroke-width="0.8"/>
<polygon points="-8.5,-6.25 -4,-4 -4,0.5 -8.5,-1.75" fill="#b8b8b8" stroke="#333" stroke-width="0.8"/>
<polygon points="0.5,-6.25 -4,-4 -4,0.5 0.5,-1.75" fill="#888" stroke="#333" stroke-width="0.8"/>
<polygon points="4.5,-8.5 9,-6.25 4.5,-4 0,-6.25" fill="#f4f4f4" stroke="#333" stroke-width="0.8"/>
<polygon points="0,-6.25 4.5,-4 4.5,0.5 0,-1.75" fill="#ddd" stroke="#333" stroke-width="0.8"/>
<polygon points="9,-6.25 4.5,-4 4.5,0.5 9,-1.75" fill="#bbb" stroke="#333" stroke-width="0.8"/>
<path d="M-5.5,4 a5.5,5.5 0 0 1 9.5,-2" stroke="#58b828" stroke-width="2.6" fill="none"/>
<polygon points="1.5,3 8.5,2 5,7.5" fill="#58b828"/>
<path d="M5.5,5 a5.5,5.5 0 0 1 -9.5,2" stroke="#e0d020" stroke-width="2.6" fill="none"/>
<polygon points="-1.5,6 -8.5,7 -5,1.5" fill="#e0d020"/>
</g>
<g transform="translate(690.5,78) scale(1)">
<polygon points="-4,-8.5 0.5,-6.25 -4,-4 -8.5,-6.25" fill="#e8e8e8" stroke="#333" stroke-width="0.8"/>
<polygon points="-8.5,-6.25 -4,-4 -4,0.5 -8.5,-1.75" fill="#b8b8b8" stroke="#333" stroke-width="0.8"/>
<polygon points="0.5,-6.25 -4,-4 -4,0.5 0.5,-1.75" fill="#888" stroke="#333" stroke-width="0.8"/>
<polygon points="4.5,-8.5 9,-6.25 4.5,-4 0,-6.25" fill="#f4f4f4" stroke="#333" stroke-width="0.8"/>
<polygon points="0,-6.25 4.5,-4 4.5,0.5 0,-1.75" fill="#ddd" stroke="#333" stroke-width="0.8"/>
<polygon points="9,-6.25 4.5,-4 4.5,0.5 9,-1.75" fill="#bbb" stroke="#333" stroke-width="0.8"/>
<path d="M-8.5,3.5 h7 M-5,0 v7" stroke="#6fe028" stroke-width="2.2" fill="none"/>
<line x1="-2" y1="9" x2="3" y2="1" stroke="#222" stroke-width="1.2"/>
<path d="M2,8.5 h8" stroke="#e6e200" stroke-width="2.4" fill="none"/>
</g>
<g transform="translate(717.6,78) scale(1)">
<ellipse cx="4" cy="7.1" rx="6.7" ry="2" fill="#000" opacity="0.35"/>
<path d="M-5.7,-6.6 v13.2 a5.7,2.2 0 0 0 11.4,0 v-13.2" fill="url(#cylb)" stroke="#123" stroke-width="1.1"/>
<ellipse cx="0" cy="-6.6" rx="5.7" ry="2.2" fill="#4a78c8" stroke="#123" stroke-width="1.1"/>
<line x1="0" y1="-4" x2="0" y2="8" stroke="#111" stroke-width="1.4" stroke-dasharray="3 2"/>
</g>
<g transform="translate(743.3,78) scale(1)">
<ellipse cx="4" cy="7.1" rx="6.7" ry="2" fill="#000" opacity="0.35"/>
<path d="M-5.7,-6.6 v13.2 a5.7,2.2 0 0 0 11.4,0 v-13.2" fill="url(#cylb)" stroke="#123" stroke-width="1.1"/>
<ellipse cx="0" cy="-6.6" rx="5.7" ry="2.2" fill="#4a78c8" stroke="#123" stroke-width="1.1"/>
<line x1="-1.5" y1="-5" x2="-1.5" y2="9" stroke="#e8e040" stroke-width="1.2"/><line x1="2" y1="-5" x2="2" y2="9" stroke="#e8e040" stroke-width="1.2"/>
</g>
<g transform="translate(769.8,78) scale(1)">
<ellipse cx="4" cy="7.1" rx="6.7" ry="2" fill="#000" opacity="0.35"/>
<path d="M-5.7,-6.6 v13.2 a5.7,2.2 0 0 0 11.4,0 v-13.2" fill="#d8ecf8" stroke="#20d0e8" stroke-width="1.2"/>
<ellipse cx="0" cy="-6.6" rx="5.7" ry="2.2" fill="#eef8fc" stroke="#20d0e8" stroke-width="1.2"/>
<path d="M-4,1 L0,6 L6,-4" stroke="#30b828" stroke-width="3" fill="none"/>
</g>
<g transform="translate(794.7,78) scale(1)">
<ellipse cx="4" cy="7.1" rx="6.7" ry="2" fill="#000" opacity="0.35"/>
<path d="M-5.7,-6.6 v13.2 a5.7,2.2 0 0 0 11.4,0 v-13.2" fill="#d8ecf8" stroke="#20d0e8" stroke-width="1.2"/>
<ellipse cx="0" cy="-6.6" rx="5.7" ry="2.2" fill="#eef8fc" stroke="#20d0e8" stroke-width="1.2"/>
<rect x="3" y="-10" width="6" height="6" fill="none" stroke="#e08a20" stroke-width="1.4"/><rect x="4" y="-8" width="3" height="3" fill="#e04040"/>
</g>
<g transform="translate(821.1,78) scale(1)">
<path d="M-5.7,-6.6 v13.2 a5.7,2.2 0 0 0 11.4,0 v-13.2" fill="#e0ecfa" stroke="#78b0e8" stroke-width="1"/>
<ellipse cx="0" cy="-6.6" rx="5.7" ry="2.2" fill="#eef4fc" stroke="#78b0e8" stroke-width="1"/>
<path d="M-4,-6 L-1,8 L2,-6 L4,8" stroke="#78b0e8" stroke-width="0.7" fill="none"/>
</g>
<g transform="translate(846.8,78) scale(1)">
<polygon points="-9,-6 0,-9 9,-6 0,-2" fill="#5a8ae0" stroke="#112" stroke-width="0.8"/><polygon points="-9,-6 0,-2 0,9 -7,2" fill="#2a58b8" stroke="#112" stroke-width="0.8"/><polygon points="9,-6 0,-2 0,9 7,2" fill="#14307a" stroke="#112" stroke-width="0.8"/>
</g>
<g transform="translate(888.7,78) scale(1)">
<line x1="2" y1="1" x2="7.5" y2="6.5" stroke="#7a8088" stroke-width="2.6"/>
<circle cx="-1" cy="-2" r="5" fill="#c8d8f0" stroke="#8a96a8" stroke-width="1.6"/>
<polygon points="5,1 9,3 5,5 1,3" fill="#aaa" stroke="#333" stroke-width="0.8"/>
<polygon points="1,3 5,5 5,9 1,7" fill="#777" stroke="#333" stroke-width="0.8"/>
<polygon points="9,3 5,5 5,9 9,7" fill="#555" stroke="#333" stroke-width="0.8"/>
<path d="M-10,-9 h4 M-8,-11 v4 M-10,-5 h4" stroke="#111" stroke-width="1"/>
</g>
<g transform="translate(914.6,78) scale(1)">
<line x1="2" y1="1" x2="7.5" y2="6.5" stroke="#7a8088" stroke-width="2.6"/>
<circle cx="-1" cy="-2" r="5" fill="#c8d8f0" stroke="#8a96a8" stroke-width="1.6"/>
<polygon points="5,1 9,3 5,5 1,3" fill="#aaa" stroke="#333" stroke-width="0.8"/>
<polygon points="1,3 5,5 5,9 1,7" fill="#777" stroke="#333" stroke-width="0.8"/>
<polygon points="9,3 5,5 5,9 9,7" fill="#555" stroke="#333" stroke-width="0.8"/>
<rect x="-10" y="-10" width="4" height="4" fill="#38b020"/>
<rect x="6" y="-10" width="4" height="4" fill="#38b020"/>
<rect x="-10" y="6" width="4" height="4" fill="#38b020"/>
<rect x="6" y="6" width="4" height="4" fill="#38b020"/>
</g>
<g transform="translate(941.2,78) scale(1)">
<rect x="-8" y="-7" width="16" height="14" fill="#eef2fa" stroke="#334" stroke-width="1"/><text x="-6" y="3.5" font-family="Liberation Sans,sans-serif" font-size="8" font-weight="bold" fill="#223">1:1</text>
<rect x="-10" y="-9" width="4" height="4" fill="#38b020"/>
<rect x="6" y="-9" width="4" height="4" fill="#38b020"/>
<rect x="-10" y="5" width="4" height="4" fill="#38b020"/>
<rect x="6" y="5" width="4" height="4" fill="#38b020"/>
</g>
<g transform="translate(967,78) scale(1)">
<line x1="-5" y1="6" x2="6" y2="-6" stroke="#30b030" stroke-width="2.2"/><polygon points="2,-8 9,-9 8,-2" fill="#30b030"/><circle cx="-6" cy="7" r="2.6" fill="#c8c8c8" stroke="#555" stroke-width="0.7"/>
</g>
<g transform="translate(993.2,78) scale(1)">
<path d="M-6.5,0 a6.5,6.5 0 0 1 11.5,-2" stroke="#38b030" stroke-width="3" fill="none"/>
<polygon points="2.5,-1 9.5,-2 6,3.5" fill="#38b030"/>
<path d="M6.5,1 a6.5,6.5 0 0 1 -11.5,2" stroke="#38b030" stroke-width="3" fill="none"/>
<polygon points="-2.5,2 -9.5,3 -6,-2.5" fill="#38b030"/>
</g>
<g transform="translate(1019.1,78) scale(1)">
<path d="M-9,-5 Q0,-13 9,-5 Q0,0 -9,-5 Z" fill="#9aa4c4" stroke="#3c4668" stroke-width="0.8"/>
<circle cx="0" cy="-5.5" r="3.2" fill="#2a3860"/><circle cx="-1" cy="-6.5" r="1" fill="#c8d4f0"/>
<path d="M-9,-5 Q0,-14 9,-5" fill="none" stroke="#2a3050" stroke-width="1.6"/>
<circle cx="0" cy="4" r="5.5" fill="#f8d840" stroke="#b89010" stroke-width="0.7"/><circle cx="-2" cy="3" r="0.8" fill="#333"/><circle cx="2" cy="3" r="0.8" fill="#333"/><path d="M-3,5.5 q3,2.5 6,0" stroke="#7a4a10" stroke-width="0.8" fill="none"/>
</g>
<g transform="translate(1062.1,78) scale(1)">
<polygon points="-9,1 1,-4 9,2 -1,8" fill="#f0f4fa" stroke="#98a0b0" stroke-width="0.6"/>
<line x1="-3" y1="3" x2="-3" y2="-7" stroke="#2060e0" stroke-width="1.8"/>
<polygon points="-5.5,-5 -3,-10 -0.5,-5" fill="#2060e0"/>
<line x1="-3" y1="3" x2="5" y2="-2" stroke="#20b030" stroke-width="1.8"/>
<polygon points="3,-4 8,-4 6,0.5" fill="#20b030"/>
<line x1="-3" y1="3" x2="4" y2="7" stroke="#e02020" stroke-width="1.8"/>
<polygon points="2,9 7,9 5,4.5" fill="#e02020"/>
<circle cx="-3" cy="3" r="1.8" fill="#ddd" stroke="#555" stroke-width="0.6"/>
</g>
<g transform="translate(1088.5,78) scale(1)">
<polygon points="-2.4,-1.4 3.6,-4.4 8.4,-0.8 2.4,2.8" fill="#f0f4fa" stroke="#98a0b0" stroke-width="0.6"/>
<line x1="1.2" y1="-0.2" x2="1.2" y2="-6.2" stroke="#2060e0" stroke-width="1.8"/>
<polygon points="-0.3,-5 1.2,-8 2.7,-5" fill="#2060e0"/>
<line x1="1.2" y1="-0.2" x2="6" y2="-3.2" stroke="#20b030" stroke-width="1.8"/>
<polygon points="4.8,-4.4 7.8,-4.4 6.6,-1.7" fill="#20b030"/>
<line x1="1.2" y1="-0.2" x2="5.4" y2="2.2" stroke="#e02020" stroke-width="1.8"/>
<polygon points="4.2,3.4 7.2,3.4 6,0.7" fill="#e02020"/>
<circle cx="1.2" cy="-0.2" r="1.08" fill="#ddd" stroke="#555" stroke-width="0.6"/>
<path d="M-8,8 L0,-1" stroke="#30a830" stroke-width="3"/><polygon points="-3,-4 4,-5 2,2" fill="#30a830"/><rect x="0" y="3" width="8" height="5" fill="#f0f0f4" stroke="#778" stroke-width="0.8"/>
</g>
<g transform="translate(1114.6,78) scale(1)">
<polygon points="-1.4,-2.4 4.6,-5.4 9.4,-1.8 3.4,1.8" fill="#f0f4fa" stroke="#98a0b0" stroke-width="0.6"/>
<line x1="2.2" y1="-1.2" x2="2.2" y2="-7.2" stroke="#2060e0" stroke-width="1.8"/>
<polygon points="0.7,-6 2.2,-9 3.7,-6" fill="#2060e0"/>
<line x1="2.2" y1="-1.2" x2="7" y2="-4.2" stroke="#20b030" stroke-width="1.8"/>
<polygon points="5.8,-5.4 8.8,-5.4 7.6,-2.7" fill="#20b030"/>
<line x1="2.2" y1="-1.2" x2="6.4" y2="1.2" stroke="#e02020" stroke-width="1.8"/>
<polygon points="5.2,2.4 8.2,2.4 7,-0.3" fill="#e02020"/>
<circle cx="2.2" cy="-1.2" r="1.08" fill="#ddd" stroke="#555" stroke-width="0.6"/>
<path d="M-8,0 L-2,7" stroke="#30a830" stroke-width="3"/><polygon points="-10,-3 -4,-3 -9,3" fill="#30a830"/><polygon points="1,9 -5,8 0,3" fill="#30a830"/>
</g>
<g transform="translate(1156.9,78) scale(1)">
<rect x="-9" y="-9" width="5.6" height="5.6" fill="#20d0e8"/>
<rect x="-2.8" y="-9" width="5.6" height="5.6" fill="#f0e020"/>
<rect x="3.4" y="-9" width="5.6" height="5.6" fill="#20c020"/>
<rect x="-9" y="-2.8" width="5.6" height="5.6" fill="#f08020"/>
<rect x="-2.8" y="-2.8" width="5.6" height="5.6" fill="#8a5a20"/>
<rect x="3.4" y="-2.8" width="5.6" height="5.6" fill="#e820d0"/>
<rect x="-9" y="3.4" width="5.6" height="5.6" fill="#2040e0"/>
<rect x="-2.8" y="3.4" width="5.6" height="5.6" fill="#20a040"/>
<rect x="3.4" y="3.4" width="5.6" height="5.6" fill="#808080"/>
</g>
<g transform="translate(1183.3,78) scale(1)">
<rect x="-8" y="-9" width="16" height="18" fill="#e8f0fc" stroke="#6a82b0" stroke-width="1"/><rect x="-6" y="-7" width="12" height="2" fill="#f0a020"/><rect x="-6" y="-4" width="12" height="1.5" fill="#6a9ae0"/>
<rect x="-6" y="-1" width="3.4" height="3" fill="#20d0e8"/>
<rect x="-2" y="-1" width="3.4" height="3" fill="#f0e020"/>
<rect x="2" y="-1" width="3.4" height="3" fill="#20c020"/>
<rect x="-6" y="2.4" width="3.4" height="3" fill="#f08020"/>
<rect x="-2" y="2.4" width="3.4" height="3" fill="#8a5a20"/>
<rect x="2" y="2.4" width="3.4" height="3" fill="#e820d0"/>
<rect x="-6" y="5.8" width="3.4" height="3" fill="#2040e0"/>
<rect x="-2" y="5.8" width="3.4" height="3" fill="#20a040"/>
<rect x="2" y="5.8" width="3.4" height="3" fill="#808080"/>
</g>
<g transform="translate(1209.9,78) scale(1)">
<circle cx="0" cy="0" r="9.5" fill="#6a9a38" stroke="#3a6a18" stroke-width="1"/><line x1="-5" y1="-5" x2="5" y2="6" stroke="#e8ecf0" stroke-width="2.8"/><line x1="5" y1="-5" x2="-5" y2="6" stroke="#5a9ae0" stroke-width="2.8"/><circle cx="-5" cy="-5" r="2.5" fill="#d0d8e0"/>
</g>
<g transform="translate(1235.3,78) scale(1)">
<rect x="-9" y="-9" width="18" height="18" fill="#e4ecf8" stroke="#3a5a98" stroke-width="1"/><rect x="-9" y="-9" width="18" height="4" fill="#2a58b8"/><rect x="-7" y="-3" width="14" height="2" fill="#e8c040"/><line x1="-4" y1="0" x2="6" y2="8" stroke="#4a88d8" stroke-width="2.4"/><line x1="6" y1="0" x2="-4" y2="8" stroke="#889" stroke-width="2.4"/>
</g>
<g transform="translate(1261.5,78) scale(1)">
<rect x="-8" y="-7" width="16" height="14" fill="none" stroke="#223" stroke-width="1.4" stroke-dasharray="2 2"/><path d="M-3,-2 q4,-6 10,-5 l2,3 q-3,4 -8,6 z" fill="#e8b070" stroke="#8a5a20" stroke-width="0.7"/><circle cx="-3" cy="4" r="3" fill="#f0e020" stroke="#2a58d8" stroke-width="1"/>
</g>
<g transform="translate(1287.4,78) scale(1)">
<polygon points="-9,7 -4,-7 10,-9 6,5" fill="#4a78d8" stroke="#1a3a88" stroke-width="1"/><g stroke="#e03030" stroke-width="0.9"><line x1="-6" y1="3" x2="7" y2="1"/><line x1="-5" y1="-1" x2="8" y2="-3"/><line x1="-3" y1="-5" x2="9" y2="-7"/><line x1="-4" y1="6" x2="0" y2="-7"/><line x1="1" y1="5.5" x2="4.5" y2="-8"/></g>
</g>
<rect x="2" y="4" width="16" height="14.5" fill="#72bf3a" stroke="#4a9a20" stroke-width="0.8"/><path d="M5.5,7 L9.5,15.5 L13,8" stroke="#fff" stroke-width="2.4" fill="none"/><circle cx="5" cy="6.5" r="1" fill="#fff"/>
<rect x="20" y="4" width="1" height="15" fill="#c8c8c8"/>
<g transform="translate(40,11) scale(1)">
<polygon points="-7,-8 3,-8 7,-4 7,8 -7,8" fill="#fff" stroke="#111" stroke-width="1.2"/><polygon points="3,-8 3,-4 7,-4" fill="#dde" stroke="#111" stroke-width="0.8"/><polygon points="-6,0 6,-2 6,7 -6,7" fill="#d8e4f8" opacity="0.8"/>
</g>
<g transform="translate(64,11) scale(1)">
<polygon points="-8,-3 -3,-5 8,-3 6,8 -8,8" fill="#f0c850" stroke="#b08820" stroke-width="0.8"/><polygon points="-8,8 -5,0 9,0 6,8" fill="#f8dc78" stroke="#b08820" stroke-width="0.8"/><path d="M-3,-3 q4,-8 10,-4" stroke="#30a830" stroke-width="2.6" fill="none"/><polygon points="4,-10 10,-6 4,-3" fill="#30a830"/>
</g>
<g transform="translate(88,11) scale(1)">
<rect x="-8" y="-7" width="10" height="6" fill="#f0d060" stroke="#b08820" stroke-width="0.7"/><rect x="-8" y="1" width="10" height="6" fill="#f0d060" stroke="#b08820" stroke-width="0.7"/><polygon points="0,-5 6,-5 9,-2 9,7 0,7" fill="#eef2fc" stroke="#778" stroke-width="0.8"/><path d="M-2,-2 h5 M-2,4 h5" stroke="#30a830" stroke-width="1"/>
</g>
<g transform="translate(111.5,11) scale(1)">
<rect x="-8" y="-7.5" width="16" height="16" fill="#3a5aa8" stroke="#1a2a58" stroke-width="0.8"/>
<rect x="-5.5" y="-6.5" width="11" height="8" fill="#f4f4f8"/>
<path d="M-5,-5 h10 M-5,-3 h10 M-5,-1 h10" stroke="#e05050" stroke-width="0.8"/>
<rect x="-4" y="3.5" width="8" height="5" fill="#c8ccd8"/><rect x="-2.5" y="4.5" width="2.5" height="3.5" fill="#223"/>
</g>
<g transform="translate(136,11) scale(1)">
<rect x="-2.76" y="-8.76" width="11.52" height="11.52" fill="#3a5aa8" stroke="#1a2a58" stroke-width="0.8"/>
<rect x="-0.96" y="-8.04" width="7.92" height="5.76" fill="#f4f4f8"/>
<path d="M-0.6,-6.96 h7.2 M-0.6,-5.52 h7.2 M-0.6,-4.08 h7.2" stroke="#e05050" stroke-width="0.576"/>
<rect x="0.12" y="-0.84" width="5.76" height="3.6" fill="#c8ccd8"/><rect x="1.2" y="-0.12" width="1.8" height="2.52" fill="#223"/>
<rect x="-8.76" y="-2.26" width="11.52" height="11.52" fill="#3a5aa8" stroke="#1a2a58" stroke-width="0.8"/>
<rect x="-6.96" y="-1.54" width="7.92" height="5.76" fill="#f4f4f8"/>
<path d="M-6.6,-0.46 h7.2 M-6.6,0.98 h7.2 M-6.6,2.42 h7.2" stroke="#e05050" stroke-width="0.576"/>
<rect x="-5.88" y="5.66" width="5.76" height="3.6" fill="#c8ccd8"/><rect x="-4.8" y="6.38" width="1.8" height="2.52" fill="#223"/>
</g>
<g transform="translate(160,11) scale(1)">
<rect x="-9.6" y="-8.6" width="11.2" height="11.2" fill="#3a5aa8" stroke="#1a2a58" stroke-width="0.8"/>
<rect x="-7.85" y="-7.9" width="7.7" height="5.6" fill="#f4f4f8"/>
<path d="M-7.5,-6.85 h7 M-7.5,-5.45 h7 M-7.5,-4.05 h7" stroke="#e05050" stroke-width="0.56"/>
<rect x="-6.8" y="-0.9" width="5.6" height="3.5" fill="#c8ccd8"/><rect x="-5.75" y="-0.2" width="1.75" height="2.45" fill="#223"/>
<path d="M3,-7 q5,1 4,6" stroke="#30a830" stroke-width="1.8" fill="none"/>
<polygon points="5,0.5 9.5,2.75 5,5 0.5,2.75" fill="#ccc" stroke="#333" stroke-width="0.8"/>
<polygon points="0.5,2.75 5,5 5,9.5 0.5,7.25" fill="#999" stroke="#333" stroke-width="0.8"/>
<polygon points="9.5,2.75 5,5 5,9.5 9.5,7.25" fill="#666" stroke="#333" stroke-width="0.8"/>
</g>
<g transform="translate(184,11) scale(1)">
<rect x="-6" y="-9" width="12" height="9" fill="#eef" stroke="#667" stroke-width="0.8"/><polygon points="0,-8 -3.5,-3.5 3.5,-3.5" fill="#30a830"/><rect x="-9" y="0" width="18" height="7" rx="1" fill="#d8d8dc" stroke="#667" stroke-width="0.8"/><rect x="-7" y="5" width="14" height="4" fill="#f4f4f8" stroke="#889" stroke-width="0.6"/>
</g>
<g transform="translate(207,11) scale(1)">
<circle cx="-0.5" cy="-0.5" r="9" fill="#6aa838" stroke="#3a7a18" stroke-width="0.8"/><circle cx="-1" cy="-1" r="5.5" fill="#c8daf0" stroke="#8a96a8" stroke-width="1.4"/><line x1="3.5" y1="3.5" x2="9.5" y2="9.5" stroke="#888" stroke-width="2.6"/>
</g>
<g transform="translate(232,12) scale(1)">
<g transform="scale(1,1)"><path d="M-6,-1 L1,-8 L1,-4 Q8,-3 7,6 Q5,9 1,9 Q5,3 1,1.5 L1,5 Z" fill="#8a8a8a" stroke="#777" stroke-width="0.5"/></g>
</g>
<g transform="translate(255,12) scale(1)">
<g transform="scale(-1,1)"><path d="M-6,-1 L1,-8 L1,-4 Q8,-3 7,6 Q5,9 1,9 Q5,3 1,1.5 L1,5 Z" fill="#8a8a8a" stroke="#777" stroke-width="0.5"/></g>
</g>
<g transform="translate(280,11) scale(1)">
<g transform="scale(1,1)"><path d="M-6,-1 L1,-8 L1,-4 Q8,-3 7,6 Q5,9 1,9 Q5,3 1,1.5 L1,5 Z" fill="#5a8ad0" stroke="#777" stroke-width="0.5"/></g>
<polygon points="-8,1 -2,1 -4,5 -2,9 -8,9 -6,5" fill="#c8a868" stroke="#6a4a18" stroke-width="0.7"/>
</g>
<rect x="295" y="8.5" width="7" height="1.2" fill="#111"/><polygon points="295,11.5 302,11.5 298.5,15" fill="#111"/>
<rect x="312" y="4" width="1" height="15" fill="#c8c8c8"/>
<polygon points="17.5,53 25.5,53 21.5,57.3" fill="#000"/>
<path d="M1799.5,11.5 h11" stroke="#111" stroke-width="1"/>
<rect x="1844.5" y="7.5" width="7.5" height="7.5" fill="#fff" stroke="#111" stroke-width="1"/><path d="M1846.5,7.5 v-2 h7.5 v7.5 h-2" fill="none" stroke="#111" stroke-width="1"/>
<path d="M1889.5,5.5 l10.5,10.5 M1900,5.5 l-10.5,10.5" stroke="#111" stroke-width="1.2"/>
<path d="M1870,36.5 h9" stroke="#9a9a9a" stroke-width="1"/>
<rect x="1888.5" y="30.5" width="6" height="6" fill="none" stroke="#9a9a9a" stroke-width="1"/><path d="M1890.5,30.5 v-2 h6 v6 h-2" fill="none" stroke="#9a9a9a" stroke-width="1"/>
<path d="M1906,28.5 l8,8 M1914,28.5 l-8,8" stroke="#9a9a9a" stroke-width="1"/>
<g transform="translate(17.5,143) scale(1.12)">
<circle cx="-5" cy="-1" r="4.5" fill="#b8c0cc" opacity="0.5"/><circle cx="-3" cy="-1" r="4.8" fill="#b8c0cc" opacity="0.6"/>
<line x1="3" y1="2" x2="8.5" y2="7.5" stroke="#7a8088" stroke-width="2.6"/>
<circle cx="0" cy="-1" r="5" fill="#d8e4f8" stroke="#8a96a8" stroke-width="1.6"/>
</g>
<g transform="translate(43.5,143) scale(1.12)">
<path d="M-8,-6 L5,8 M5,-6 L-8,8" stroke="#3a6ad0" stroke-width="1.6"/>
<polygon points="9,-10 11,-7 -2,8 -6,10 -5,5" fill="#f08a20" stroke="#6a3a10" stroke-width="0.7"/><polygon points="-6,10 -5,5 -2,8" fill="#f0d8b0" stroke="#333" stroke-width="0.5"/><polygon points="9,-10 11,-7 9,-5 7,-8" fill="#c02020"/>
<polygon points="5,-10.5 11,-10.5 8,-7.5" fill="#000"/>
</g>
<g transform="translate(17.5,169) scale(1.12)">
<rect x="-7" y="-6" width="14" height="12" fill="#e0e8fa" stroke="#334" stroke-width="1"/>
<rect x="-9" y="-8" width="4" height="4" fill="#38b020"/>
<rect x="5" y="-8" width="4" height="4" fill="#38b020"/>
<rect x="-9" y="4" width="4" height="4" fill="#38b020"/>
<rect x="5" y="4" width="4" height="4" fill="#38b020"/>
</g>
<g transform="translate(43.5,169) scale(1.12)">
<path d="M-7,-3 q0,-5 5,-3 q6,4 6,9 q-3,4 -8,0" stroke="#3a6ad0" stroke-width="1.8" fill="none"/>
<polygon points="9,-10 11,-7 -2,8 -6,10 -5,5" fill="#f08a20" stroke="#6a3a10" stroke-width="0.7"/><polygon points="-6,10 -5,5 -2,8" fill="#f0d8b0" stroke="#333" stroke-width="0.5"/><polygon points="9,-10 11,-7 9,-5 7,-8" fill="#c02020"/>
<polygon points="5,-10.5 11,-10.5 8,-7.5" fill="#000"/>
</g>
<g transform="translate(17.5,195) scale(1.12)">
<line x1="2" y1="1" x2="7.5" y2="6.5" stroke="#7a8088" stroke-width="2.6"/>
<circle cx="-1" cy="-2" r="5" fill="#c8d8f0" stroke="#8a96a8" stroke-width="1.6"/>
<polygon points="5,1 9,3 5,5 1,3" fill="#aaa" stroke="#333" stroke-width="0.8"/>
<polygon points="1,3 5,5 5,9 1,7" fill="#777" stroke="#333" stroke-width="0.8"/>
<polygon points="9,3 5,5 5,9 9,7" fill="#555" stroke="#333" stroke-width="0.8"/>
<path d="M-10,-9 h4 M-8,-11 v4 M-10,-5 h4" stroke="#111" stroke-width="1"/>
<polygon points="5,-10.5 11,-10.5 8,-7.5" fill="#000"/>
</g>
<g transform="translate(43.5,195) scale(1.12)">
<rect x="-8" y="-7" width="15" height="15" fill="#fff" stroke="#e8e000" stroke-width="1.8"/><path d="M-5,0 L-1,5 L7,-5" stroke="#30b028" stroke-width="3" fill="none"/>
<polygon points="5,-10.5 11,-10.5 8,-7.5" fill="#000"/>
</g>
<g transform="translate(17.5,221) scale(1.12)">
<polygon points="-9,1 1,-4 9,2 -1,8" fill="#f0f4fa" stroke="#98a0b0" stroke-width="0.6"/>
<line x1="-3" y1="3" x2="-3" y2="-7" stroke="#2060e0" stroke-width="1.8"/>
<polygon points="-5.5,-5 -3,-10 -0.5,-5" fill="#2060e0"/>
<line x1="-3" y1="3" x2="5" y2="-2" stroke="#20b030" stroke-width="1.8"/>
<polygon points="3,-4 8,-4 6,0.5" fill="#20b030"/>
<line x1="-3" y1="3" x2="4" y2="7" stroke="#e02020" stroke-width="1.8"/>
<polygon points="2,9 7,9 5,4.5" fill="#e02020"/>
<circle cx="-3" cy="3" r="1.8" fill="#ddd" stroke="#555" stroke-width="0.6"/>
<polygon points="5,-10.5 11,-10.5 8,-7.5" fill="#000"/>
</g>
<g transform="translate(43.5,221) scale(1.12)">
<path d="M-9,-2 q4,-8 8,2 q4,10 9,0" stroke="#3a6ad0" stroke-width="1.8" fill="none"/>
<polygon points="9,-10 11,-7 -2,8 -6,10 -5,5" fill="#f08a20" stroke="#6a3a10" stroke-width="0.7"/><polygon points="-6,10 -5,5 -2,8" fill="#f0d8b0" stroke="#333" stroke-width="0.5"/><polygon points="9,-10 11,-7 9,-5 7,-8" fill="#c02020"/>
<polygon points="5,-10.5 11,-10.5 8,-7.5" fill="#000"/>
</g>
<g transform="translate(17.5,247) scale(1.12)">
<polygon points="-9,-8 2,-9 6,-6 -5,-5" fill="#5a78d8"/><polygon points="-9,-5.5 2,-6.5 6,-3.5 -5,-2.5" fill="#e8ecf8"/><polygon points="-9,-3 2,-4 6,-1 -5,0" fill="#8aa0e0"/><polygon points="-9,-0.5 2,-1.5 6,1.5 -5,2.5" fill="#f4f4f8" stroke="#889" stroke-width="0.4"/>
<ellipse cx="0" cy="5" rx="8.5" ry="4.5" fill="#b88a68" stroke="#6a4a38" stroke-width="0.7"/><circle cx="-4" cy="5" r="1.8" fill="#2050d0"/><circle cx="0" cy="6.5" r="1.8" fill="#20a030"/><circle cx="3.5" cy="3.5" r="1.8" fill="#d02020"/>
<line x1="9" y1="-9" x2="3" y2="2" stroke="#b06820" stroke-width="1.8"/><line x1="3.5" y1="1" x2="1.5" y2="4.5" stroke="#333" stroke-width="2"/>
<polygon points="5,-10.5 11,-10.5 8,-7.5" fill="#000"/>
</g>
<g transform="translate(43.5,247) scale(1.12)">
<polygon points="-9,8 -4,-6 10,-9 6,5" fill="#8ab4f0" stroke="#2a58b8" stroke-width="1.2"/><path d="M-6.5,1 L8,-2 M1,-7.5 L-2,6.5" stroke="#e8f0fc" stroke-width="1.4"/>
<polygon points="5,-10.5 11,-10.5 8,-7.5" fill="#000"/>
</g>
<g transform="translate(17.5,273) scale(1.12)">
<path d="M-6.5,0 a6.5,6.5 0 0 1 11.5,-2" stroke="#5a92d8" stroke-width="3.6" fill="none"/>
<polygon points="2.5,-1 9.5,-2 6,3.5" fill="#5a92d8"/>
<path d="M6.5,1 a6.5,6.5 0 0 1 -11.5,2" stroke="#7ab0e8" stroke-width="3.6" fill="none"/>
<polygon points="-2.5,2 -9.5,3 -6,-2.5" fill="#7ab0e8"/>
<polygon points="5,-10.5 11,-10.5 8,-7.5" fill="#000"/>
</g>
<g transform="translate(43.5,273) scale(1.12)">
<polygon points="0,-8 8,-4 0,0 -8,-4" fill="#d0d0d0" stroke="#444" stroke-width="0.8"/>
<polygon points="-8,-4 0,0 0,8 -8,4" fill="#9a9a9a" stroke="#444" stroke-width="0.8"/>
<polygon points="8,-4 0,0 0,8 8,4" fill="#707070" stroke="#444" stroke-width="0.8"/>
<polygon points="5,-10.5 11,-10.5 8,-7.5" fill="#000"/>
</g>
<g transform="translate(17.5,298.5) scale(1.12)">
<text x="-5.5" y="7" font-family="Liberation Sans,sans-serif" font-size="20" font-weight="bold" fill="#3a6ad0" stroke="#1a3a88" stroke-width="0.4">?</text><ellipse cx="0" cy="9" rx="5" ry="1.5" fill="#000" opacity="0.25"/>
<polygon points="5,-10.5 11,-10.5 8,-7.5" fill="#000"/>
</g>
<g transform="translate(43.5,298.5) scale(1.12)">
<path d="M-8,-6 v14 M8,-6 v14" stroke="#111" stroke-width="1.4"/><path d="M-7,-3 h14" stroke="#e8d800" stroke-width="2"/><polygon points="-7,-3 -3,-5.5 -3,-0.5" fill="#e8d800"/><polygon points="7,-3 3,-5.5 3,-0.5" fill="#e8d800"/>
<polygon points="5,-10.5 11,-10.5 8,-7.5" fill="#000"/>
</g>
<g transform="translate(17.5,324.5) scale(1.12)">
<polygon points="-7,-5 7,-5 5,9 -5,9" fill="#a8d8f0" stroke="#3a78a8" stroke-width="1"/><ellipse cx="0" cy="-5" rx="7.5" ry="2.2" fill="#d0ecf8" stroke="#3a78a8" stroke-width="1"/><path d="M-3,-2 L-2,7 M0,-2 L0,7 M3,-2 L2,7" stroke="#5a98c8" stroke-width="0.9"/><polygon points="-3,-8 1,-10 3,-7" fill="#e8e040"/>
<polygon points="5,-10.5 11,-10.5 8,-7.5" fill="#000"/>
</g>
<g transform="translate(43.5,324.5) scale(1.12)">
<g transform="scale(1,1)"><path d="M-6,-1 L1,-8 L1,-4 Q8,-3 7,6 Q5,9 1,9 Q5,3 1,1.5 L1,5 Z" fill="#9a9a9a" stroke="#777" stroke-width="0.5"/></g>
<polygon points="5,-10.5 11,-10.5 8,-7.5" fill="#000"/>
</g>
<g transform="translate(17.5,350.5) scale(1.12)">
<circle cx="1" cy="0" r="6.5" fill="none" stroke="#c06a18" stroke-width="1.8"/><path d="M1,-9 v18 M-8,0 h18 M-5.5,-6.5 l13,13 M7.5,-6.5 l-13,13" stroke="#c06a18" stroke-width="1.3"/><circle cx="1" cy="0" r="2" fill="#e89030"/><rect x="-10" y="-9" width="2.5" height="14" fill="#445"/><path d="M-10,7 h16 l3,3 h-16 z" fill="#f08a20"/>
<polygon points="5,-10.5 11,-10.5 8,-7.5" fill="#000"/>
</g>
<g transform="translate(43.5,350.5) scale(1.12)">
<polygon points="-9,-5 -4,-8 3,-6 8,-6 6,4 -9,4" fill="#f0cc58" stroke="#a88420" stroke-width="0.8"/><polygon points="-1,0 9,0 9,9 -7,9 -7,4" fill="#f8f8fc" stroke="#222" stroke-width="1"/><path d="M-2,-7 q5,-4 8,1" stroke="#30a830" stroke-width="2.4" fill="none"/><polygon points="3,-4 9,-4 7,-9" fill="#30a830"/>
</g>
<rect x="64" y="113" width="24" height="24" fill="#80859c"/>
<rect x="92" y="113" width="24" height="24" fill="#80859c"/>
<rect x="120" y="113" width="24" height="24" fill="#80859c"/>
<rect x="148" y="113" width="24" height="24" fill="#80859c"/>
<rect x="176" y="113" width="24" height="24" fill="#80859c"/>
<rect x="204" y="113" width="24" height="24" fill="#80859c"/>
<rect x="232" y="113" width="24" height="24" fill="#80859c"/>
<rect x="260" y="113" width="24" height="24" fill="#80859c"/>
<rect x="288" y="113" width="24" height="24" fill="#80859c"/>
<rect x="316" y="113" width="24" height="24" fill="#80859c"/>
<rect x="344" y="113" width="24" height="24" fill="#80859c"/>
<rect x="64" y="141" width="24" height="24" fill="#80859c"/>
<rect x="64" y="169" width="24" height="24" fill="#80859c"/>
<rect x="64.5" y="197.5" width="24" height="24" fill="#8f8b86" stroke="#dfbf62" stroke-width="1.4"/>
<rect x="64" y="225" width="24" height="24" fill="#80859c"/>
<rect x="64" y="253" width="24" height="24" fill="#80859c"/>
<g transform="translate(76,125) scale(1)">
<rect x="-9" y="-8" width="18" height="4" rx="1" fill="#44557e"/><rect x="-9" y="-2" width="18" height="4" rx="1" fill="#44557e"/><rect x="-9" y="4" width="18" height="4" rx="1" fill="#44557e"/>
</g>
<g transform="translate(104,125) scale(1)">
<rect x="-6.5" y="-6" width="13" height="12" fill="#dfe8fa" stroke="#334" stroke-width="1"/>
<rect x="-9" y="-8.5" width="4" height="4" fill="#38b020"/>
<rect x="5" y="-8.5" width="4" height="4" fill="#38b020"/>
<rect x="-9" y="4.5" width="4" height="4" fill="#38b020"/>
<rect x="5" y="4.5" width="4" height="4" fill="#38b020"/>
</g>
<g transform="translate(132,125) scale(1)">
<circle cx="-5" cy="-1" r="4.5" fill="#b8c0cc" opacity="0.5"/><circle cx="-3" cy="-1" r="4.8" fill="#b8c0cc" opacity="0.6"/>
<line x1="3" y1="2" x2="8.5" y2="7.5" stroke="#7a8088" stroke-width="2.6"/>
<circle cx="0" cy="-1" r="5" fill="#d8e4f8" stroke="#8a96a8" stroke-width="1.6"/>
</g>
<g transform="translate(160,125) scale(1)">
<polygon points="-9,2 0,-3 9,3 0,8" fill="none" stroke="#3a3f55" stroke-width="0.7"/>
<line x1="-0.85" y1="2.85" x2="-0.85" y2="-6.65" stroke="#2060e0" stroke-width="1.8"/>
<polygon points="-3.225,-4.75 -0.85,-9.5 1.525,-4.75" fill="#2060e0"/>
<line x1="-0.85" y1="2.85" x2="6.75" y2="-1.9" stroke="#20b030" stroke-width="1.8"/>
<polygon points="4.85,-3.8 9.6,-3.8 7.7,0.475" fill="#20b030"/>
<line x1="-0.85" y1="2.85" x2="5.8" y2="6.65" stroke="#e02020" stroke-width="1.8"/>
<polygon points="3.9,8.55 8.65,8.55 6.75,4.275" fill="#e02020"/>
<circle cx="-0.85" cy="2.85" r="1.71" fill="#ddd" stroke="#555" stroke-width="0.6"/>
</g>
<g transform="translate(188,125) scale(1)">
<path d="M-9,4.5 L-0.5,0.3 L9.4,4.5 M-0.5,0.3 V-9.5" stroke="#0a0a0a" stroke-width="1.2" fill="none"/>
<polygon points="-9,-5 0,-9.5 9.4,-5.5 0.8,-1" fill="#58e048"/>
<path d="M-9,-5 L0,-9.5 L9.4,-5.5 L0.8,-1 Z M-9,-5 V4.5 L0.8,9.5 V-1 M9.4,-5.5 V4.5 L0.8,9.5" stroke="#0a0a0a" stroke-width="1.3" fill="none" stroke-linejoin="round"/>
</g>
<g transform="translate(216,125) scale(1)">
<polygon points="-9,4.5 -0.5,0.3 9.4,4.5 0.8,9.5" fill="#40c838"/>
<path d="M-9,4.5 L-0.5,0.3 L9.4,4.5 M-0.5,0.3 V-9.5" stroke="#0a0a0a" stroke-width="1.2" fill="none"/>
<path d="M-9,-5 L0,-9.5 L9.4,-5.5 L0.8,-1 Z M-9,-5 V4.5 L0.8,9.5 V-1 M9.4,-5.5 V4.5 L0.8,9.5" stroke="#0a0a0a" stroke-width="1.3" fill="none" stroke-linejoin="round"/>
</g>
<g transform="translate(244,125) scale(1)">
<polygon points="-9,-5 0,-9.5 -0.5,0.3 -9,4.5" fill="#38c030"/>
<path d="M-9,4.5 L-0.5,0.3 L9.4,4.5 M-0.5,0.3 V-9.5" stroke="#0a0a0a" stroke-width="1.2" fill="none"/>
<path d="M-9,-5 L0,-9.5 L9.4,-5.5 L0.8,-1 Z M-9,-5 V4.5 L0.8,9.5 V-1 M9.4,-5.5 V4.5 L0.8,9.5" stroke="#0a0a0a" stroke-width="1.3" fill="none" stroke-linejoin="round"/>
</g>
<g transform="translate(272,125) scale(1)">
<path d="M-9,4.5 L-0.5,0.3 L9.4,4.5 M-0.5,0.3 V-9.5" stroke="#0a0a0a" stroke-width="1.2" fill="none"/>
<polygon points="0.8,-1 9.4,-5.5 9.4,4.5 0.8,9.5" fill="#249a20"/>
<path d="M-9,-5 L0,-9.5 L9.4,-5.5 L0.8,-1 Z M-9,-5 V4.5 L0.8,9.5 V-1 M9.4,-5.5 V4.5 L0.8,9.5" stroke="#0a0a0a" stroke-width="1.3" fill="none" stroke-linejoin="round"/>
</g>
<g transform="translate(300,125) scale(1)">
<path d="M-9,4.5 L-0.5,0.3 L9.4,4.5 M-0.5,0.3 V-9.5" stroke="#0a0a0a" stroke-width="1.2" fill="none"/>
<polygon points="-9,-5 0.8,-1 0.8,9.5 -9,4.5" fill="#38c030"/>
<path d="M-9,-5 L0,-9.5 L9.4,-5.5 L0.8,-1 Z M-9,-5 V4.5 L0.8,9.5 V-1 M9.4,-5.5 V4.5 L0.8,9.5" stroke="#0a0a0a" stroke-width="1.3" fill="none" stroke-linejoin="round"/>
</g>
<g transform="translate(328,125) scale(1)">
<polygon points="0,-9.5 9.4,-5.5 9.4,4.5 -0.5,0.3" fill="#2aa825"/>
<path d="M-9,4.5 L-0.5,0.3 L9.4,4.5 M-0.5,0.3 V-9.5" stroke="#0a0a0a" stroke-width="1.2" fill="none"/>
<path d="M-9,-5 L0,-9.5 L9.4,-5.5 L0.8,-1 Z M-9,-5 V4.5 L0.8,9.5 V-1 M9.4,-5.5 V4.5 L0.8,9.5" stroke="#0a0a0a" stroke-width="1.3" fill="none" stroke-linejoin="round"/>
</g>
<g transform="translate(356,125) scale(1)">
<polygon points="-9,-5 0,-9.5 9.4,-5.5 0.8,-1" fill="#58e048" stroke="#1a7a18" stroke-width="0.8" stroke-linejoin="round"/>
<polygon points="-9,-5 0.8,-1 0.8,9.5 -9,4.5" fill="#38c030" stroke="#1a7a18" stroke-width="0.8" stroke-linejoin="round"/>
<polygon points="0.8,-1 9.4,-5.5 9.4,4.5 0.8,9.5" fill="#249a20" stroke="#1a7a18" stroke-width="0.8" stroke-linejoin="round"/>
</g>
<g transform="translate(76,153) scale(1)">
<path d="M-4.5,-6.5 v13 a4.5,2.2 0 0 0 9,0 v-13" fill="none" stroke="#222" stroke-width="1.1"/>
<ellipse cx="0" cy="-6.5" rx="4.5" ry="2.2" fill="none" stroke="#222" stroke-width="1.1"/>
<path d="M-4.5,6.5 a4.5,2.2 0 0 1 9,0" fill="none" stroke="#222" stroke-width="0.7"/>
</g>
<g transform="translate(76,181) scale(1)">
<path d="M-4.5,-6.5 v13 a4.5,2.2 0 0 0 9,0 v-13" fill="none" stroke="#222" stroke-width="1.1"/>
<ellipse cx="0" cy="-6.5" rx="4.5" ry="2.2" fill="none" stroke="#222" stroke-width="1.1"/>
<path d="M-4.5,6.5 a4.5,2.2 0 0 1 9,0" fill="none" stroke="#222" stroke-width="0.7"/>
</g>
<g transform="translate(76,209) scale(1)">
<path d="M-4.5,-6.5 v13 a4.5,2.2 0 0 0 9,0 v-13" fill="url(#cylb)" stroke="#101828" stroke-width="1.1"/>
<ellipse cx="0" cy="-6.5" rx="4.5" ry="2.2" fill="#4a78c8" stroke="#101828" stroke-width="1.1"/>
</g>
<g transform="translate(76,237) scale(1)">
<path d="M-4.5,-6.5 v13 a4.5,2.2 0 0 0 9,0 v-13" fill="#d4e0f4" stroke="#334" stroke-width="1.1"/>
<ellipse cx="0" cy="-6.5" rx="4.5" ry="2.2" fill="#e8f0fa" stroke="#334" stroke-width="1.1"/>
</g>
<g transform="translate(76,265) scale(1)">
<path d="M-4.5,-6.5 v13 a4.5,2.2 0 0 0 9,0 v-13" fill="none" stroke="#222" stroke-width="1.1"/>
<ellipse cx="0" cy="-6.5" rx="4.5" ry="2.2" fill="none" stroke="#222" stroke-width="1.1"/>
<path d="M-4.5,6.5 a4.5,2.2 0 0 1 9,0" fill="none" stroke="#222" stroke-width="0.7"/>
<path d="M-4,-5 L-1,7 L2,-5 L4,7" stroke="#222" stroke-width="0.7" fill="none"/>
</g>
<g transform="translate(1466,1011) scale(1)">
<line x1="-1" y1="1" x2="-6" y2="6" stroke="#3a6ab8" stroke-width="2"/><circle cx="2" cy="-2" r="4" fill="#e8f0fc" stroke="#3a6ab8" stroke-width="1.6"/>
</g>
<g transform="translate(1901,1010) scale(1)">
<circle cx="0" cy="0" r="7" fill="#1a3a9a" stroke="#0a1a4a" stroke-width="0.8"/><path d="M-5,-3 q3,-3 6,-1 q1,3 -2,4 q-1,3 -3,2 z" fill="#30b040"/><path d="M2,2 q3,-1 4,1 q-1,3 -3,3 z" fill="#30b040"/><circle cx="-2" cy="-3" r="1.5" fill="#fff" opacity="0.6"/>
</g>
<g transform="translate(1190,1030) scale(1)">
<rect x="-8.5" y="-8.5" width="17" height="17" fill="#f4c8c8" stroke="#c03838" stroke-width="1.2"/>
<path d="M-4.5,0 a4.5,4.5 0 0 1 7.5,-2" stroke="#d03030" stroke-width="2.2" fill="none"/>
<polygon points="0.5,-1 7.5,-2 4,3.5" fill="#d03030"/>
<path d="M4.5,1 a4.5,4.5 0 0 1 -7.5,2" stroke="#d03030" stroke-width="2.2" fill="none"/>
<polygon points="-0.5,2 -7.5,3 -4,-2.5" fill="#d03030"/>
</g>
<g transform="translate(1220,1030) scale(1)">
<rect x="-9" y="-9" width="18" height="18" fill="#fdd767"/><polygon points="-4,-6 3,-7 6,0 0,4 -6,1" fill="#b070c8" stroke="#704a88" stroke-width="0.6"/><path d="M1,1 L7,8" stroke="#e8e8f0" stroke-width="2.2"/><path d="M-5,-5 l3,3 M3,-6 l-2,3" stroke="#fff" stroke-width="1"/>
</g>
<g transform="translate(1251,1030) scale(1)">
<polygon points="-8,0 0,-7 8,0" fill="#c87838" stroke="#6a3a10" stroke-width="0.7"/><rect x="-6" y="0" width="12" height="8" fill="#dfe8fa" stroke="#446" stroke-width="0.8"/><rect x="-3" y="2" width="3" height="3" fill="#3a6ad0"/><rect x="1" y="4" width="3" height="4" fill="#3a6ad0"/><path d="M2,-8 q5,-1 7,3" stroke="#e8b060" stroke-width="2.4" fill="none"/>
</g>
<g transform="translate(1283,1030) scale(1)">
<text x="-5.5" y="7" font-family="Liberation Sans,sans-serif" font-size="19" font-weight="bold" fill="#3a6ad0" stroke="#1a3a88" stroke-width="0.4">?</text><ellipse cx="0" cy="8.5" rx="5" ry="1.5" fill="#000" opacity="0.25"/>
</g>
<g transform="translate(1314,1030) scale(1)">
<polygon points="-2,-7 2,-5 -2,-3 -6,-5" fill="#5a8ae0" stroke="#333" stroke-width="0.8"/>
<polygon points="-6,-5 -2,-3 -2,1 -6,-1" fill="#2a58b8" stroke="#333" stroke-width="0.8"/>
<polygon points="2,-5 -2,-3 -2,1 2,-1" fill="#1a3a88" stroke="#333" stroke-width="0.8"/>
<polygon points="4,-1.5 8.5,0.75 4,3 -0.5,0.75" fill="#88a8c8" stroke="#333" stroke-width="0.8"/>
<polygon points="-0.5,0.75 4,3 4,7.5 -0.5,5.25" fill="#587898" stroke="#333" stroke-width="0.8"/>
<polygon points="8.5,0.75 4,3 4,7.5 8.5,5.25" fill="#385878" stroke="#333" stroke-width="0.8"/>
<path d="M-9,2 h7" stroke="#e02020" stroke-width="2"/><polygon points="-3,-1 1,2 -3,5" fill="#e02020"/>
</g>
<g transform="translate(1345,1030) scale(1)">
<rect x="-9" y="-9" width="18" height="18" fill="#fdd767"/>
<polygon points="0,-6.5 7,-3 0,0.5 -7,-3" fill="#d838d0" stroke="#224" stroke-width="0.8"/>
<polygon points="-7,-3 0,0.5 0,7.5 -7,4" fill="#38a8d8" stroke="#224" stroke-width="0.8"/>
<polygon points="7,-3 0,0.5 0,7.5 7,4" fill="#2878b8" stroke="#224" stroke-width="0.8"/>
</g>
<g transform="translate(1437,1030) scale(1)">
<rect x="-7" y="-7" width="14" height="14" fill="#e8ecf8" stroke="#445" stroke-width="1.2"/><path d="M-7,-1 h14 M0,-7 v14" stroke="#445" stroke-width="1.2"/>
</g>
<g transform="translate(1360,960)">
<path d="M40,8 q-4,-6 -9,-5 M43,8 q2,-6 7,-6" stroke="#7a4a20" stroke-width="2" fill="none"/><circle cx="31" cy="3" r="2.3" fill="#7a4a20"/><circle cx="50" cy="2" r="2.3" fill="#7a4a20"/>
<circle cx="24" cy="20" r="7" fill="#b87a48"/><circle cx="62" cy="18" r="7" fill="#b87a48"/><circle cx="24" cy="20" r="3.5" fill="#d8a878"/><circle cx="62" cy="18" r="3.5" fill="#d8a878"/>
<ellipse cx="43" cy="36" rx="25" ry="24" fill="#b87a48"/>
<ellipse cx="44" cy="40" rx="19" ry="18" fill="#ffe636"/>
<circle cx="38" cy="38" r="1.2" fill="#5a3a18"/><circle cx="49" cy="38" r="1.2" fill="#5a3a18"/><ellipse cx="32" cy="43" rx="4" ry="2.5" fill="#ff9a6a" opacity="0.8"/><ellipse cx="55" cy="43" rx="4" ry="2.5" fill="#ff9a6a" opacity="0.8"/><path d="M42,43 h3" stroke="#5a3a18" stroke-width="0.9"/>
<path d="M30,56 q14,8 28,0 l4,18 q-18,8 -36,0 z" fill="#ffe636"/><path d="M28,60 q16,6 32,-2" stroke="#a86a38" stroke-width="2" fill="none"/>
<ellipse cx="33" cy="70" rx="9" ry="8" fill="#b87a48"/><circle cx="27" cy="63" r="3" fill="#b87a48"/><circle cx="39" cy="63" r="3" fill="#b87a48"/><ellipse cx="33" cy="72" rx="5" ry="4" fill="#e8c098"/><circle cx="30" cy="68" r="0.9" fill="#3a2a18"/><circle cx="36" cy="68" r="0.9" fill="#3a2a18"/>
<ellipse cx="40" cy="79" rx="18" ry="2.5" fill="#a86a38" opacity="0.7"/>
<text x="70" y="31" font-family="Liberation Sans,sans-serif" font-size="24" font-weight="bold" fill="#fff2d8" stroke="#c8783a" stroke-width="2" transform="rotate(12 80 22)">W</text>
<circle cx="86" cy="40" r="9" fill="#c8925a" stroke="#8a5a28" stroke-width="1"/><circle cx="86" cy="40" r="4" fill="#f4e0c0"/><circle cx="79" cy="32" r="3.2" fill="#c8925a"/><circle cx="93" cy="32" r="3.2" fill="#c8925a"/>
<text x="74" y="74" font-family="Liberation Sans,sans-serif" font-size="25" font-weight="bold" fill="#ffe066" stroke="#c8783a" stroke-width="2" transform="rotate(-8 86 64)">W</text>
<circle cx="7" cy="45" r="8.5" fill="#a8705a"/><text x="2.5" y="50" font-family="Liberation Sans,sans-serif" font-size="13" fill="#fff">A</text>
<circle cx="16" cy="70" r="8.5" fill="#a8705a"/><path d="M10,67 l3,-2.5 h6 l3,2.5 l-2,2.5 l-1.5,-1 v6 h-5 v-6 l-1.5,1 z" fill="#fff"/>
</g>
</svg>
</body>
</html>
